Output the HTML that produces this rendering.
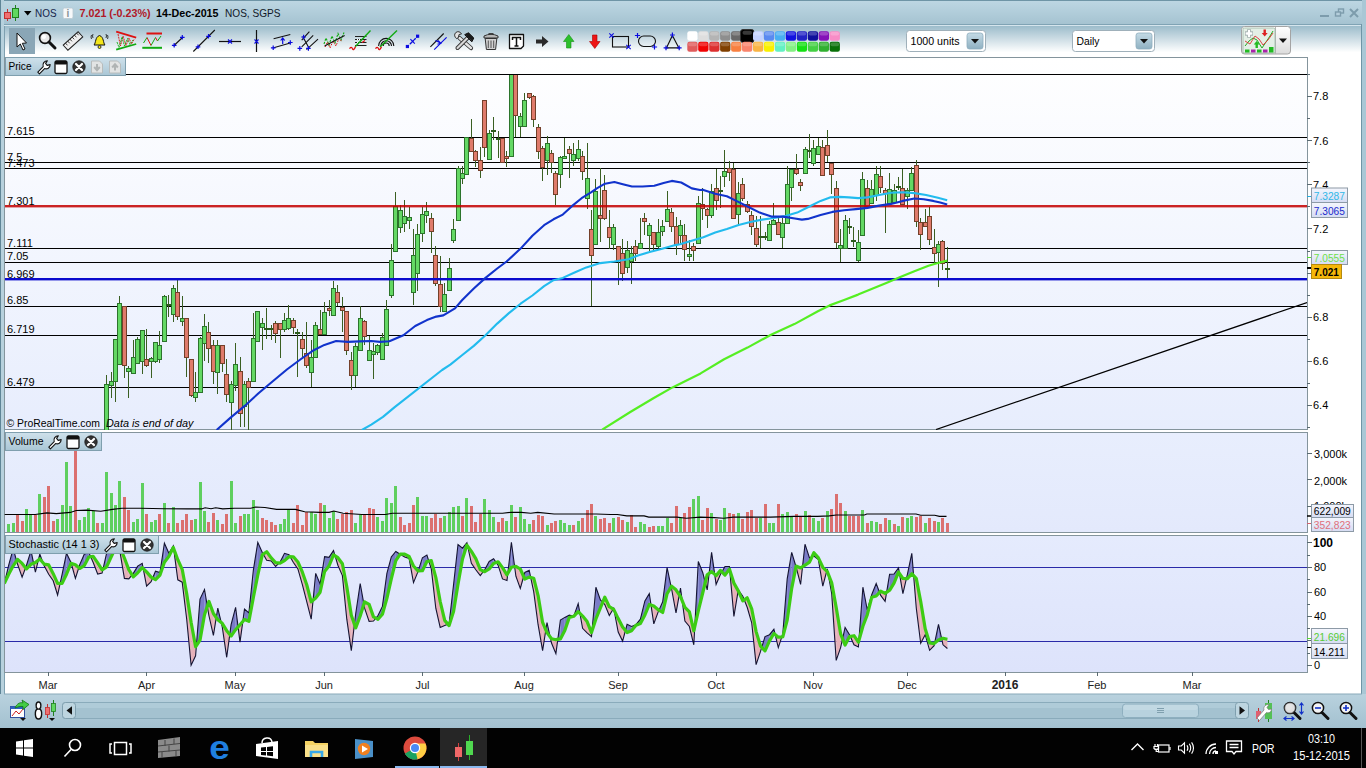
<!DOCTYPE html>
<html><head><meta charset="utf-8"><title>NOS</title>
<style>
html,body{margin:0;padding:0;background:#a9c7d5;overflow:hidden}
body{width:1366px;height:768px;position:relative;font-family:"Liberation Sans",Arial,sans-serif}
svg{position:absolute;left:0;top:0;display:block}
text{font-family:"Liberation Sans",Arial,sans-serif}
</style></head><body>
<svg width="1366" height="768" viewBox="0 0 1366 768">
<defs>
<linearGradient id="gTitle" x1="0" y1="0" x2="0" y2="1"><stop offset="0" stop-color="#bed7e3"/><stop offset="0.5" stop-color="#b1cdda"/><stop offset="1" stop-color="#a4c2d0"/></linearGradient>
<linearGradient id="gTool" x1="0" y1="0" x2="0" y2="1"><stop offset="0" stop-color="#9cbccb"/><stop offset="0.85" stop-color="#ffffff"/><stop offset="1" stop-color="#ffffff"/></linearGradient>
<linearGradient id="gPrice" x1="0" y1="0" x2="0" y2="1"><stop offset="0" stop-color="#ffffff"/><stop offset="1" stop-color="#e7edfd"/></linearGradient>
<linearGradient id="gVol" x1="0" y1="0" x2="0" y2="1"><stop offset="0" stop-color="#e8eefd"/><stop offset="1" stop-color="#e3e9fc"/></linearGradient>
<linearGradient id="gSto" x1="0" y1="0" x2="0" y2="1"><stop offset="0" stop-color="#e5ebfd"/><stop offset="1" stop-color="#dde3fb"/></linearGradient>
<linearGradient id="gTab" x1="0" y1="0" x2="0" y2="1"><stop offset="0" stop-color="#cfe1eb"/><stop offset="1" stop-color="#a9c6d5"/></linearGradient>
<linearGradient id="gBot" x1="0" y1="0" x2="0" y2="1"><stop offset="0" stop-color="#b9d2de"/><stop offset="1" stop-color="#a3c1d0"/></linearGradient>
<linearGradient id="gBtn" x1="0" y1="0" x2="0" y2="1"><stop offset="0" stop-color="#ffffff"/><stop offset="1" stop-color="#dcdcdc"/></linearGradient>
<linearGradient id="gDrop" x1="0" y1="0" x2="0" y2="1"><stop offset="0" stop-color="#c5dbe6"/><stop offset="1" stop-color="#8fb1c2"/></linearGradient>
<linearGradient id="gLbl" x1="0" y1="0" x2="0" y2="1"><stop offset="0" stop-color="#f4f6fd"/><stop offset="1" stop-color="#d5dcf3"/></linearGradient>
<clipPath id="cpP"><rect x="5" y="75" width="1302" height="355"/></clipPath>
<clipPath id="cpS"><rect x="5" y="536" width="1302" height="136"/></clipPath>
</defs>

<rect x="0" y="0" width="1366" height="728" fill="#a9c7d5"/>
<rect x="0" y="0" width="1366" height="25" fill="url(#gTitle)"/>
<rect x="0" y="0" width="1366" height="1" fill="#6f95a6"/>
<rect x="4" y="24" width="1358" height="1" fill="#7fa3b4"/>
<rect x="4" y="25" width="1358" height="1" fill="#d5e5ed"/>
<rect x="4" y="26" width="1358" height="31" fill="url(#gTool)"/>
<rect x="4" y="57" width="1358" height="637" fill="#ffffff"/>
<rect x="0" y="0" width="1" height="728" fill="#5f8597"/>
<rect x="1" y="0" width="3" height="728" fill="#b7d1dd"/>
<rect x="4" y="26" width="1" height="668" fill="#7fa0b0"/>
<rect x="1361" y="24" width="1" height="670" fill="#6f95a6"/>
<rect x="1362" y="0" width="4" height="728" fill="#a9c7d5"/>
<rect x="0" y="694" width="1366" height="34" fill="url(#gBot)"/>
<rect x="4" y="693.500" width="1358" height="1" fill="#8aaaba"/>
<rect x="4.500" y="57.500" width="1303" height="372" fill="url(#gPrice)" stroke="#84949c" stroke-width="1"/>
<rect x="4.500" y="432.500" width="1303" height="100" fill="url(#gVol)" stroke="#84949c" stroke-width="1"/>
<rect x="4.500" y="535.500" width="1303" height="137" fill="url(#gSto)" stroke="#84949c" stroke-width="1"/>
<g shape-rendering="crispEdges">
<line x1="5" y1="74.5" x2="1307" y2="74.5" stroke="#000" stroke-width="1.4"/>
<line x1="5" y1="137.5" x2="1307" y2="137.5" stroke="#000" stroke-width="1.4"/>
<line x1="5" y1="162.5" x2="1307" y2="162.5" stroke="#000" stroke-width="1.4"/>
<line x1="5" y1="168.5" x2="1307" y2="168.5" stroke="#000" stroke-width="1.4"/>
<line x1="5" y1="248.5" x2="1307" y2="248.5" stroke="#000" stroke-width="1.4"/>
<line x1="5" y1="262.5" x2="1307" y2="262.5" stroke="#000" stroke-width="1.4"/>
<line x1="5" y1="306.5" x2="1307" y2="306.5" stroke="#000" stroke-width="1.4"/>
<line x1="5" y1="335.5" x2="1307" y2="335.5" stroke="#000" stroke-width="1.4"/>
<line x1="5" y1="387.5" x2="1307" y2="387.5" stroke="#000" stroke-width="1.4"/>
</g>
<line x1="936" y1="429.5" x2="1307" y2="302.5" stroke="#000" stroke-width="1.3" clip-path="url(#cpP)"/>
<text x="7" y="135.3" font-size="11" fill="#000">7.615</text>
<text x="7" y="160.7" font-size="11" fill="#000">7.5</text>
<text x="7" y="166.7" font-size="11" fill="#000">7.473</text>
<text x="7" y="246.6" font-size="11" fill="#000">7.111</text>
<text x="7" y="260.1" font-size="11" fill="#000">7.05</text>
<text x="7" y="304.2" font-size="11" fill="#000">6.85</text>
<text x="7" y="333.1" font-size="11" fill="#000">6.719</text>
<text x="7" y="386.1" font-size="11" fill="#000">6.479</text>
<text x="7" y="204.7" font-size="11" fill="#000">7.301</text>
<text x="7" y="277.9" font-size="11" fill="#000">6.969</text>
<g clip-path="url(#cpP)" shape-rendering="crispEdges">
<rect x="106" y="375" width="1" height="63" fill="#3a5f22"/>
<rect x="104" y="384" width="5" height="55" fill="#2c742c"/>
<rect x="105" y="385" width="3" height="53" fill="#64d864"/>
<rect x="111" y="372" width="1" height="26" fill="#3a5f22"/>
<rect x="109" y="381" width="5" height="5" fill="#2c742c"/>
<rect x="110" y="382" width="3" height="3" fill="#64d864"/>
<rect x="115" y="339" width="1" height="63" fill="#3a5f22"/>
<rect x="113" y="339" width="5" height="43" fill="#2c742c"/>
<rect x="114" y="340" width="3" height="41" fill="#64d864"/>
<rect x="119" y="296" width="1" height="68" fill="#3a5f22"/>
<rect x="117" y="303" width="5" height="62" fill="#2c742c"/>
<rect x="118" y="304" width="3" height="60" fill="#64d864"/>
<rect x="124" y="306" width="1" height="72" fill="#3a5f22"/>
<rect x="122" y="306" width="5" height="60" fill="#74402a"/>
<rect x="123" y="307" width="3" height="58" fill="#df7b6b"/>
<rect x="128" y="366" width="1" height="32" fill="#3a5f22"/>
<rect x="126" y="368" width="5" height="4" fill="#2c742c"/>
<rect x="127" y="369" width="3" height="2" fill="#64d864"/>
<rect x="133" y="340" width="1" height="33" fill="#3a5f22"/>
<rect x="131" y="357" width="5" height="17" fill="#2c742c"/>
<rect x="132" y="358" width="3" height="15" fill="#64d864"/>
<rect x="137" y="337" width="1" height="26" fill="#3a5f22"/>
<rect x="135" y="339" width="5" height="25" fill="#2c742c"/>
<rect x="136" y="340" width="3" height="23" fill="#64d864"/>
<rect x="142" y="330" width="1" height="44" fill="#3a5f22"/>
<rect x="140" y="330" width="5" height="32" fill="#2c742c"/>
<rect x="141" y="331" width="3" height="30" fill="#64d864"/>
<rect x="146" y="329" width="1" height="38" fill="#3a5f22"/>
<rect x="144" y="359" width="5" height="7" fill="#74402a"/>
<rect x="145" y="360" width="3" height="5" fill="#df7b6b"/>
<rect x="151" y="357" width="1" height="21" fill="#3a5f22"/>
<rect x="149" y="358" width="5" height="4" fill="#2c742c"/>
<rect x="150" y="359" width="3" height="2" fill="#64d864"/>
<rect x="155" y="342" width="1" height="21" fill="#3a5f22"/>
<rect x="153" y="342" width="5" height="20" fill="#2c742c"/>
<rect x="154" y="343" width="3" height="18" fill="#64d864"/>
<rect x="159" y="331" width="1" height="32" fill="#3a5f22"/>
<rect x="157" y="345" width="5" height="15" fill="#2c742c"/>
<rect x="158" y="346" width="3" height="13" fill="#64d864"/>
<rect x="164" y="295" width="1" height="46" fill="#3a5f22"/>
<rect x="162" y="296" width="5" height="46" fill="#2c742c"/>
<rect x="163" y="297" width="3" height="44" fill="#64d864"/>
<rect x="168" y="295" width="1" height="22" fill="#3a5f22"/>
<rect x="166" y="304" width="5" height="1" fill="#2c5a1c"/>
<rect x="166" y="304" width="5" height="2" fill="#2c5a1c"/>
<rect x="173" y="285" width="1" height="37" fill="#3a5f22"/>
<rect x="171" y="288" width="5" height="27" fill="#2c742c"/>
<rect x="172" y="289" width="3" height="25" fill="#64d864"/>
<rect x="177" y="280" width="1" height="40" fill="#3a5f22"/>
<rect x="175" y="292" width="5" height="25" fill="#74402a"/>
<rect x="176" y="293" width="3" height="23" fill="#df7b6b"/>
<rect x="182" y="296" width="1" height="30" fill="#3a5f22"/>
<rect x="180" y="318" width="5" height="4" fill="#2c742c"/>
<rect x="181" y="319" width="3" height="2" fill="#64d864"/>
<rect x="186" y="318" width="1" height="59" fill="#3a5f22"/>
<rect x="184" y="318" width="5" height="40" fill="#74402a"/>
<rect x="185" y="319" width="3" height="38" fill="#df7b6b"/>
<rect x="191" y="359" width="1" height="38" fill="#3a5f22"/>
<rect x="189" y="359" width="5" height="37" fill="#74402a"/>
<rect x="190" y="360" width="3" height="35" fill="#df7b6b"/>
<rect x="195" y="372" width="1" height="30" fill="#3a5f22"/>
<rect x="193" y="392" width="5" height="6" fill="#2c742c"/>
<rect x="194" y="393" width="3" height="4" fill="#64d864"/>
<rect x="200" y="337" width="1" height="55" fill="#3a5f22"/>
<rect x="198" y="338" width="5" height="55" fill="#2c742c"/>
<rect x="199" y="339" width="3" height="53" fill="#64d864"/>
<rect x="204" y="314" width="1" height="47" fill="#3a5f22"/>
<rect x="202" y="326" width="5" height="18" fill="#2c742c"/>
<rect x="203" y="327" width="3" height="16" fill="#64d864"/>
<rect x="208" y="322" width="1" height="41" fill="#3a5f22"/>
<rect x="206" y="332" width="5" height="17" fill="#74402a"/>
<rect x="207" y="333" width="3" height="15" fill="#df7b6b"/>
<rect x="213" y="340" width="1" height="44" fill="#3a5f22"/>
<rect x="211" y="345" width="5" height="27" fill="#74402a"/>
<rect x="212" y="346" width="3" height="25" fill="#df7b6b"/>
<rect x="217" y="340" width="1" height="54" fill="#3a5f22"/>
<rect x="215" y="345" width="5" height="28" fill="#2c742c"/>
<rect x="216" y="346" width="3" height="26" fill="#64d864"/>
<rect x="222" y="345" width="1" height="27" fill="#3a5f22"/>
<rect x="220" y="345" width="5" height="19" fill="#74402a"/>
<rect x="221" y="346" width="3" height="17" fill="#df7b6b"/>
<rect x="226" y="359" width="1" height="43" fill="#3a5f22"/>
<rect x="224" y="374" width="5" height="21" fill="#74402a"/>
<rect x="225" y="375" width="3" height="19" fill="#df7b6b"/>
<rect x="231" y="381" width="1" height="54" fill="#3a5f22"/>
<rect x="229" y="384" width="5" height="19" fill="#2c742c"/>
<rect x="230" y="385" width="3" height="17" fill="#64d864"/>
<rect x="235" y="343" width="1" height="48" fill="#3a5f22"/>
<rect x="233" y="364" width="5" height="22" fill="#2c742c"/>
<rect x="234" y="365" width="3" height="20" fill="#64d864"/>
<rect x="240" y="357" width="1" height="70" fill="#3a5f22"/>
<rect x="238" y="371" width="5" height="43" fill="#74402a"/>
<rect x="239" y="372" width="3" height="41" fill="#df7b6b"/>
<rect x="244" y="381" width="1" height="46" fill="#3a5f22"/>
<rect x="242" y="384" width="5" height="23" fill="#2c742c"/>
<rect x="243" y="385" width="3" height="21" fill="#64d864"/>
<rect x="248" y="378" width="1" height="54" fill="#3a5f22"/>
<rect x="246" y="381" width="5" height="7" fill="#74402a"/>
<rect x="247" y="382" width="3" height="5" fill="#df7b6b"/>
<rect x="253" y="313" width="1" height="68" fill="#3a5f22"/>
<rect x="251" y="338" width="5" height="44" fill="#2c742c"/>
<rect x="252" y="339" width="3" height="42" fill="#64d864"/>
<rect x="257" y="311" width="1" height="30" fill="#3a5f22"/>
<rect x="255" y="311" width="5" height="31" fill="#2c742c"/>
<rect x="256" y="312" width="3" height="29" fill="#64d864"/>
<rect x="262" y="318" width="1" height="32" fill="#3a5f22"/>
<rect x="260" y="323" width="5" height="5" fill="#2c742c"/>
<rect x="261" y="324" width="3" height="3" fill="#64d864"/>
<rect x="266" y="308" width="1" height="31" fill="#3a5f22"/>
<rect x="264" y="328" width="5" height="1" fill="#2c5a1c"/>
<rect x="264" y="328" width="5" height="2" fill="#2c5a1c"/>
<rect x="271" y="325" width="1" height="15" fill="#3a5f22"/>
<rect x="269" y="328" width="5" height="1" fill="#2c5a1c"/>
<rect x="269" y="328" width="5" height="2" fill="#2c5a1c"/>
<rect x="275" y="321" width="1" height="22" fill="#3a5f22"/>
<rect x="273" y="323" width="5" height="11" fill="#74402a"/>
<rect x="274" y="324" width="3" height="9" fill="#df7b6b"/>
<rect x="280" y="323" width="1" height="35" fill="#3a5f22"/>
<rect x="278" y="323" width="5" height="7" fill="#74402a"/>
<rect x="279" y="324" width="3" height="5" fill="#df7b6b"/>
<rect x="284" y="313" width="1" height="19" fill="#3a5f22"/>
<rect x="282" y="320" width="5" height="10" fill="#2c742c"/>
<rect x="283" y="321" width="3" height="8" fill="#64d864"/>
<rect x="288" y="305" width="1" height="25" fill="#3a5f22"/>
<rect x="286" y="318" width="5" height="11" fill="#2c742c"/>
<rect x="287" y="319" width="3" height="9" fill="#64d864"/>
<rect x="293" y="318" width="1" height="16" fill="#3a5f22"/>
<rect x="291" y="320" width="5" height="8" fill="#74402a"/>
<rect x="292" y="321" width="3" height="6" fill="#df7b6b"/>
<rect x="297" y="329" width="1" height="48" fill="#3a5f22"/>
<rect x="295" y="332" width="5" height="2" fill="#2c5a1c"/>
<rect x="302" y="332" width="1" height="25" fill="#3a5f22"/>
<rect x="300" y="339" width="5" height="10" fill="#74402a"/>
<rect x="301" y="340" width="3" height="8" fill="#df7b6b"/>
<rect x="306" y="322" width="1" height="46" fill="#3a5f22"/>
<rect x="304" y="353" width="5" height="13" fill="#74402a"/>
<rect x="305" y="354" width="3" height="11" fill="#df7b6b"/>
<rect x="311" y="340" width="1" height="47" fill="#3a5f22"/>
<rect x="309" y="357" width="5" height="16" fill="#2c742c"/>
<rect x="310" y="358" width="3" height="14" fill="#64d864"/>
<rect x="315" y="322" width="1" height="35" fill="#3a5f22"/>
<rect x="313" y="325" width="5" height="33" fill="#2c742c"/>
<rect x="314" y="326" width="3" height="31" fill="#64d864"/>
<rect x="320" y="310" width="1" height="24" fill="#3a5f22"/>
<rect x="318" y="329" width="5" height="6" fill="#74402a"/>
<rect x="319" y="330" width="3" height="4" fill="#df7b6b"/>
<rect x="324" y="302" width="1" height="32" fill="#3a5f22"/>
<rect x="322" y="312" width="5" height="23" fill="#2c742c"/>
<rect x="323" y="313" width="3" height="21" fill="#64d864"/>
<rect x="329" y="300" width="1" height="16" fill="#3a5f22"/>
<rect x="327" y="308" width="5" height="3" fill="#74402a"/>
<rect x="328" y="309" width="3" height="1" fill="#df7b6b"/>
<rect x="333" y="281" width="1" height="34" fill="#3a5f22"/>
<rect x="331" y="288" width="5" height="28" fill="#2c742c"/>
<rect x="332" y="289" width="3" height="26" fill="#64d864"/>
<rect x="337" y="285" width="1" height="21" fill="#3a5f22"/>
<rect x="335" y="292" width="5" height="11" fill="#74402a"/>
<rect x="336" y="293" width="3" height="9" fill="#df7b6b"/>
<rect x="342" y="297" width="1" height="35" fill="#3a5f22"/>
<rect x="340" y="307" width="5" height="4" fill="#74402a"/>
<rect x="341" y="308" width="3" height="2" fill="#df7b6b"/>
<rect x="346" y="311" width="1" height="44" fill="#3a5f22"/>
<rect x="344" y="311" width="5" height="40" fill="#74402a"/>
<rect x="345" y="312" width="3" height="38" fill="#df7b6b"/>
<rect x="351" y="352" width="1" height="38" fill="#3a5f22"/>
<rect x="349" y="360" width="5" height="16" fill="#74402a"/>
<rect x="350" y="361" width="3" height="14" fill="#df7b6b"/>
<rect x="355" y="343" width="1" height="44" fill="#3a5f22"/>
<rect x="353" y="346" width="5" height="30" fill="#2c742c"/>
<rect x="354" y="347" width="3" height="28" fill="#64d864"/>
<rect x="360" y="306" width="1" height="44" fill="#3a5f22"/>
<rect x="358" y="318" width="5" height="33" fill="#2c742c"/>
<rect x="359" y="319" width="3" height="31" fill="#64d864"/>
<rect x="364" y="320" width="1" height="25" fill="#3a5f22"/>
<rect x="362" y="321" width="5" height="16" fill="#74402a"/>
<rect x="363" y="322" width="3" height="14" fill="#df7b6b"/>
<rect x="369" y="336" width="1" height="24" fill="#3a5f22"/>
<rect x="367" y="350" width="5" height="11" fill="#2c742c"/>
<rect x="368" y="351" width="3" height="9" fill="#64d864"/>
<rect x="373" y="343" width="1" height="36" fill="#3a5f22"/>
<rect x="371" y="351" width="5" height="4" fill="#2c742c"/>
<rect x="372" y="352" width="3" height="2" fill="#64d864"/>
<rect x="377" y="344" width="1" height="11" fill="#3a5f22"/>
<rect x="375" y="345" width="5" height="8" fill="#2c742c"/>
<rect x="376" y="346" width="3" height="6" fill="#64d864"/>
<rect x="382" y="333" width="1" height="26" fill="#3a5f22"/>
<rect x="380" y="337" width="5" height="23" fill="#2c742c"/>
<rect x="381" y="338" width="3" height="21" fill="#64d864"/>
<rect x="386" y="300" width="1" height="45" fill="#3a5f22"/>
<rect x="384" y="309" width="5" height="37" fill="#2c742c"/>
<rect x="385" y="310" width="3" height="35" fill="#64d864"/>
<rect x="391" y="244" width="1" height="54" fill="#3a5f22"/>
<rect x="389" y="260" width="5" height="36" fill="#2c742c"/>
<rect x="390" y="261" width="3" height="34" fill="#64d864"/>
<rect x="395" y="192" width="1" height="59" fill="#3a5f22"/>
<rect x="393" y="206" width="5" height="46" fill="#2c742c"/>
<rect x="394" y="207" width="3" height="44" fill="#64d864"/>
<rect x="400" y="205" width="1" height="28" fill="#3a5f22"/>
<rect x="398" y="210" width="5" height="18" fill="#2c742c"/>
<rect x="399" y="211" width="3" height="16" fill="#64d864"/>
<rect x="404" y="200" width="1" height="32" fill="#3a5f22"/>
<rect x="402" y="216" width="5" height="8" fill="#2c742c"/>
<rect x="403" y="217" width="3" height="6" fill="#64d864"/>
<rect x="409" y="207" width="1" height="22" fill="#3a5f22"/>
<rect x="407" y="217" width="5" height="4" fill="#2c742c"/>
<rect x="408" y="218" width="3" height="2" fill="#64d864"/>
<rect x="413" y="229" width="1" height="76" fill="#3a5f22"/>
<rect x="411" y="255" width="5" height="38" fill="#2c742c"/>
<rect x="412" y="256" width="3" height="36" fill="#64d864"/>
<rect x="417" y="224" width="1" height="67" fill="#3a5f22"/>
<rect x="415" y="234" width="5" height="40" fill="#2c742c"/>
<rect x="416" y="235" width="3" height="38" fill="#64d864"/>
<rect x="422" y="207" width="1" height="35" fill="#3a5f22"/>
<rect x="420" y="214" width="5" height="20" fill="#2c742c"/>
<rect x="421" y="215" width="3" height="18" fill="#64d864"/>
<rect x="426" y="202" width="1" height="21" fill="#3a5f22"/>
<rect x="424" y="211" width="5" height="5" fill="#2c742c"/>
<rect x="425" y="212" width="3" height="3" fill="#64d864"/>
<rect x="431" y="213" width="1" height="40" fill="#3a5f22"/>
<rect x="429" y="218" width="5" height="14" fill="#74402a"/>
<rect x="430" y="219" width="3" height="12" fill="#df7b6b"/>
<rect x="435" y="246" width="1" height="40" fill="#3a5f22"/>
<rect x="433" y="255" width="5" height="29" fill="#74402a"/>
<rect x="434" y="256" width="3" height="27" fill="#df7b6b"/>
<rect x="440" y="256" width="1" height="56" fill="#3a5f22"/>
<rect x="438" y="284" width="5" height="23" fill="#74402a"/>
<rect x="439" y="285" width="3" height="21" fill="#df7b6b"/>
<rect x="444" y="283" width="1" height="29" fill="#3a5f22"/>
<rect x="442" y="294" width="5" height="18" fill="#2c742c"/>
<rect x="443" y="295" width="3" height="16" fill="#64d864"/>
<rect x="449" y="258" width="1" height="32" fill="#3a5f22"/>
<rect x="447" y="268" width="5" height="23" fill="#2c742c"/>
<rect x="448" y="269" width="3" height="21" fill="#64d864"/>
<rect x="453" y="219" width="1" height="24" fill="#3a5f22"/>
<rect x="451" y="229" width="5" height="12" fill="#2c742c"/>
<rect x="452" y="230" width="3" height="10" fill="#64d864"/>
<rect x="458" y="166" width="1" height="54" fill="#3a5f22"/>
<rect x="456" y="168" width="5" height="53" fill="#2c742c"/>
<rect x="457" y="169" width="3" height="51" fill="#64d864"/>
<rect x="462" y="166" width="1" height="18" fill="#3a5f22"/>
<rect x="460" y="173" width="5" height="6" fill="#2c742c"/>
<rect x="461" y="174" width="3" height="4" fill="#64d864"/>
<rect x="466" y="137" width="1" height="37" fill="#3a5f22"/>
<rect x="464" y="137" width="5" height="38" fill="#2c742c"/>
<rect x="465" y="138" width="3" height="36" fill="#64d864"/>
<rect x="471" y="119" width="1" height="32" fill="#3a5f22"/>
<rect x="469" y="138" width="5" height="14" fill="#74402a"/>
<rect x="470" y="139" width="3" height="12" fill="#df7b6b"/>
<rect x="475" y="150" width="1" height="17" fill="#3a5f22"/>
<rect x="473" y="151" width="5" height="10" fill="#74402a"/>
<rect x="474" y="152" width="3" height="8" fill="#df7b6b"/>
<rect x="480" y="147" width="1" height="31" fill="#3a5f22"/>
<rect x="478" y="160" width="5" height="11" fill="#74402a"/>
<rect x="479" y="161" width="3" height="9" fill="#df7b6b"/>
<rect x="484" y="100" width="1" height="57" fill="#3a5f22"/>
<rect x="482" y="100" width="5" height="48" fill="#74402a"/>
<rect x="483" y="101" width="3" height="46" fill="#df7b6b"/>
<rect x="489" y="130" width="1" height="30" fill="#3a5f22"/>
<rect x="487" y="133" width="5" height="27" fill="#2c742c"/>
<rect x="488" y="134" width="3" height="25" fill="#64d864"/>
<rect x="493" y="117" width="1" height="23" fill="#3a5f22"/>
<rect x="491" y="130" width="5" height="1" fill="#2c5a1c"/>
<rect x="491" y="130" width="5" height="2" fill="#2c5a1c"/>
<rect x="498" y="131" width="1" height="27" fill="#3a5f22"/>
<rect x="496" y="138" width="5" height="2" fill="#2c5a1c"/>
<rect x="502" y="138" width="1" height="24" fill="#3a5f22"/>
<rect x="500" y="138" width="5" height="25" fill="#74402a"/>
<rect x="501" y="139" width="3" height="23" fill="#df7b6b"/>
<rect x="506" y="151" width="1" height="16" fill="#3a5f22"/>
<rect x="504" y="156" width="5" height="3" fill="#74402a"/>
<rect x="505" y="157" width="3" height="1" fill="#df7b6b"/>
<rect x="511" y="74" width="1" height="82" fill="#3a5f22"/>
<rect x="509" y="74" width="5" height="83" fill="#2c742c"/>
<rect x="510" y="75" width="3" height="81" fill="#64d864"/>
<rect x="515" y="74" width="1" height="63" fill="#3a5f22"/>
<rect x="513" y="74" width="5" height="42" fill="#74402a"/>
<rect x="514" y="75" width="3" height="40" fill="#df7b6b"/>
<rect x="520" y="113" width="1" height="24" fill="#3a5f22"/>
<rect x="518" y="116" width="5" height="11" fill="#2c742c"/>
<rect x="519" y="117" width="3" height="9" fill="#64d864"/>
<rect x="524" y="93" width="1" height="33" fill="#3a5f22"/>
<rect x="522" y="100" width="5" height="27" fill="#2c742c"/>
<rect x="523" y="101" width="3" height="25" fill="#64d864"/>
<rect x="529" y="93" width="1" height="6" fill="#3a5f22"/>
<rect x="527" y="93" width="5" height="5" fill="#74402a"/>
<rect x="528" y="94" width="3" height="3" fill="#df7b6b"/>
<rect x="533" y="95" width="1" height="32" fill="#3a5f22"/>
<rect x="531" y="96" width="5" height="24" fill="#74402a"/>
<rect x="532" y="97" width="3" height="22" fill="#df7b6b"/>
<rect x="538" y="124" width="1" height="35" fill="#3a5f22"/>
<rect x="536" y="127" width="5" height="25" fill="#74402a"/>
<rect x="537" y="128" width="3" height="23" fill="#df7b6b"/>
<rect x="542" y="146" width="1" height="35" fill="#3a5f22"/>
<rect x="540" y="148" width="5" height="20" fill="#74402a"/>
<rect x="541" y="149" width="3" height="18" fill="#df7b6b"/>
<rect x="547" y="136" width="1" height="39" fill="#3a5f22"/>
<rect x="545" y="143" width="5" height="18" fill="#2c742c"/>
<rect x="546" y="144" width="3" height="16" fill="#64d864"/>
<rect x="551" y="150" width="1" height="23" fill="#3a5f22"/>
<rect x="549" y="153" width="5" height="10" fill="#74402a"/>
<rect x="550" y="154" width="3" height="8" fill="#df7b6b"/>
<rect x="555" y="171" width="1" height="34" fill="#3a5f22"/>
<rect x="553" y="173" width="5" height="22" fill="#74402a"/>
<rect x="554" y="174" width="3" height="20" fill="#df7b6b"/>
<rect x="560" y="156" width="1" height="32" fill="#3a5f22"/>
<rect x="558" y="157" width="5" height="18" fill="#2c742c"/>
<rect x="559" y="158" width="3" height="16" fill="#64d864"/>
<rect x="564" y="138" width="1" height="20" fill="#3a5f22"/>
<rect x="562" y="156" width="5" height="3" fill="#2c742c"/>
<rect x="563" y="157" width="3" height="1" fill="#64d864"/>
<rect x="569" y="146" width="1" height="32" fill="#3a5f22"/>
<rect x="567" y="149" width="5" height="5" fill="#74402a"/>
<rect x="568" y="150" width="3" height="3" fill="#df7b6b"/>
<rect x="573" y="143" width="1" height="23" fill="#3a5f22"/>
<rect x="571" y="154" width="5" height="7" fill="#2c742c"/>
<rect x="572" y="155" width="3" height="5" fill="#64d864"/>
<rect x="578" y="140" width="1" height="21" fill="#3a5f22"/>
<rect x="576" y="149" width="5" height="10" fill="#2c742c"/>
<rect x="577" y="150" width="3" height="8" fill="#64d864"/>
<rect x="582" y="151" width="1" height="29" fill="#3a5f22"/>
<rect x="580" y="156" width="5" height="16" fill="#74402a"/>
<rect x="581" y="157" width="3" height="14" fill="#df7b6b"/>
<rect x="587" y="143" width="1" height="66" fill="#3a5f22"/>
<rect x="585" y="178" width="5" height="21" fill="#2c742c"/>
<rect x="586" y="179" width="3" height="19" fill="#64d864"/>
<rect x="591" y="210" width="1" height="96" fill="#3a5f22"/>
<rect x="589" y="229" width="5" height="27" fill="#74402a"/>
<rect x="590" y="230" width="3" height="25" fill="#df7b6b"/>
<rect x="595" y="179" width="1" height="65" fill="#3a5f22"/>
<rect x="593" y="191" width="5" height="54" fill="#2c742c"/>
<rect x="594" y="192" width="3" height="52" fill="#64d864"/>
<rect x="600" y="168" width="1" height="74" fill="#3a5f22"/>
<rect x="598" y="215" width="5" height="4" fill="#74402a"/>
<rect x="599" y="216" width="3" height="2" fill="#df7b6b"/>
<rect x="604" y="175" width="1" height="45" fill="#3a5f22"/>
<rect x="602" y="190" width="5" height="29" fill="#74402a"/>
<rect x="603" y="191" width="3" height="27" fill="#df7b6b"/>
<rect x="609" y="210" width="1" height="39" fill="#3a5f22"/>
<rect x="607" y="227" width="5" height="11" fill="#74402a"/>
<rect x="608" y="228" width="3" height="9" fill="#df7b6b"/>
<rect x="613" y="224" width="1" height="26" fill="#3a5f22"/>
<rect x="611" y="227" width="5" height="18" fill="#2c742c"/>
<rect x="612" y="228" width="3" height="16" fill="#64d864"/>
<rect x="618" y="246" width="1" height="39" fill="#3a5f22"/>
<rect x="616" y="246" width="5" height="15" fill="#74402a"/>
<rect x="617" y="247" width="3" height="13" fill="#df7b6b"/>
<rect x="622" y="239" width="1" height="42" fill="#3a5f22"/>
<rect x="620" y="253" width="5" height="21" fill="#74402a"/>
<rect x="621" y="254" width="3" height="19" fill="#df7b6b"/>
<rect x="627" y="241" width="1" height="32" fill="#3a5f22"/>
<rect x="625" y="250" width="5" height="18" fill="#2c742c"/>
<rect x="626" y="251" width="3" height="16" fill="#64d864"/>
<rect x="631" y="246" width="1" height="38" fill="#3a5f22"/>
<rect x="629" y="253" width="5" height="9" fill="#2c742c"/>
<rect x="630" y="254" width="3" height="7" fill="#64d864"/>
<rect x="635" y="240" width="1" height="21" fill="#3a5f22"/>
<rect x="633" y="246" width="5" height="8" fill="#74402a"/>
<rect x="634" y="247" width="3" height="6" fill="#df7b6b"/>
<rect x="640" y="218" width="1" height="30" fill="#3a5f22"/>
<rect x="638" y="243" width="5" height="6" fill="#2c742c"/>
<rect x="639" y="244" width="3" height="4" fill="#64d864"/>
<rect x="644" y="213" width="1" height="22" fill="#3a5f22"/>
<rect x="642" y="218" width="5" height="4" fill="#74402a"/>
<rect x="643" y="219" width="3" height="2" fill="#df7b6b"/>
<rect x="649" y="223" width="1" height="28" fill="#3a5f22"/>
<rect x="647" y="225" width="5" height="11" fill="#2c742c"/>
<rect x="648" y="226" width="3" height="9" fill="#64d864"/>
<rect x="653" y="232" width="1" height="19" fill="#3a5f22"/>
<rect x="651" y="232" width="5" height="13" fill="#74402a"/>
<rect x="652" y="233" width="3" height="11" fill="#df7b6b"/>
<rect x="658" y="219" width="1" height="29" fill="#3a5f22"/>
<rect x="656" y="232" width="5" height="15" fill="#2c742c"/>
<rect x="657" y="233" width="3" height="13" fill="#64d864"/>
<rect x="662" y="220" width="1" height="16" fill="#3a5f22"/>
<rect x="660" y="226" width="5" height="6" fill="#2c742c"/>
<rect x="661" y="227" width="3" height="4" fill="#64d864"/>
<rect x="667" y="191" width="1" height="30" fill="#3a5f22"/>
<rect x="665" y="209" width="5" height="13" fill="#2c742c"/>
<rect x="666" y="210" width="3" height="11" fill="#64d864"/>
<rect x="671" y="208" width="1" height="24" fill="#3a5f22"/>
<rect x="669" y="212" width="5" height="15" fill="#74402a"/>
<rect x="670" y="213" width="3" height="13" fill="#df7b6b"/>
<rect x="676" y="217" width="1" height="38" fill="#3a5f22"/>
<rect x="674" y="226" width="5" height="19" fill="#74402a"/>
<rect x="675" y="227" width="3" height="17" fill="#df7b6b"/>
<rect x="680" y="220" width="1" height="24" fill="#3a5f22"/>
<rect x="678" y="225" width="5" height="11" fill="#2c742c"/>
<rect x="679" y="226" width="3" height="9" fill="#64d864"/>
<rect x="684" y="224" width="1" height="37" fill="#3a5f22"/>
<rect x="682" y="235" width="5" height="15" fill="#74402a"/>
<rect x="683" y="236" width="3" height="13" fill="#df7b6b"/>
<rect x="689" y="240" width="1" height="21" fill="#3a5f22"/>
<rect x="687" y="254" width="5" height="3" fill="#2c742c"/>
<rect x="688" y="255" width="3" height="1" fill="#64d864"/>
<rect x="693" y="243" width="1" height="18" fill="#3a5f22"/>
<rect x="691" y="246" width="5" height="5" fill="#74402a"/>
<rect x="692" y="247" width="3" height="3" fill="#df7b6b"/>
<rect x="698" y="196" width="1" height="47" fill="#3a5f22"/>
<rect x="696" y="203" width="5" height="41" fill="#2c742c"/>
<rect x="697" y="204" width="3" height="39" fill="#64d864"/>
<rect x="702" y="188" width="1" height="32" fill="#3a5f22"/>
<rect x="700" y="204" width="5" height="5" fill="#74402a"/>
<rect x="701" y="205" width="3" height="3" fill="#df7b6b"/>
<rect x="707" y="208" width="1" height="20" fill="#3a5f22"/>
<rect x="705" y="209" width="5" height="7" fill="#74402a"/>
<rect x="706" y="210" width="3" height="5" fill="#df7b6b"/>
<rect x="711" y="184" width="1" height="34" fill="#3a5f22"/>
<rect x="709" y="191" width="5" height="25" fill="#2c742c"/>
<rect x="710" y="192" width="3" height="23" fill="#64d864"/>
<rect x="716" y="169" width="1" height="41" fill="#3a5f22"/>
<rect x="714" y="188" width="5" height="13" fill="#74402a"/>
<rect x="715" y="189" width="3" height="11" fill="#df7b6b"/>
<rect x="720" y="176" width="1" height="32" fill="#3a5f22"/>
<rect x="718" y="190" width="5" height="2" fill="#2c5a1c"/>
<rect x="724" y="150" width="1" height="37" fill="#3a5f22"/>
<rect x="722" y="171" width="5" height="6" fill="#2c742c"/>
<rect x="723" y="172" width="3" height="4" fill="#64d864"/>
<rect x="729" y="161" width="1" height="20" fill="#3a5f22"/>
<rect x="727" y="168" width="5" height="5" fill="#74402a"/>
<rect x="728" y="169" width="3" height="3" fill="#df7b6b"/>
<rect x="733" y="163" width="1" height="55" fill="#3a5f22"/>
<rect x="731" y="169" width="5" height="50" fill="#74402a"/>
<rect x="732" y="170" width="3" height="48" fill="#df7b6b"/>
<rect x="738" y="182" width="1" height="42" fill="#3a5f22"/>
<rect x="736" y="193" width="5" height="22" fill="#2c742c"/>
<rect x="737" y="194" width="3" height="20" fill="#64d864"/>
<rect x="742" y="178" width="1" height="23" fill="#3a5f22"/>
<rect x="740" y="184" width="5" height="15" fill="#74402a"/>
<rect x="741" y="185" width="3" height="13" fill="#df7b6b"/>
<rect x="747" y="201" width="1" height="12" fill="#3a5f22"/>
<rect x="745" y="204" width="5" height="8" fill="#74402a"/>
<rect x="746" y="205" width="3" height="6" fill="#df7b6b"/>
<rect x="751" y="211" width="1" height="24" fill="#3a5f22"/>
<rect x="749" y="215" width="5" height="12" fill="#74402a"/>
<rect x="750" y="216" width="3" height="10" fill="#df7b6b"/>
<rect x="756" y="216" width="1" height="31" fill="#3a5f22"/>
<rect x="754" y="228" width="5" height="17" fill="#74402a"/>
<rect x="755" y="229" width="3" height="15" fill="#df7b6b"/>
<rect x="760" y="216" width="1" height="32" fill="#3a5f22"/>
<rect x="758" y="236" width="5" height="2" fill="#2c5a1c"/>
<rect x="765" y="232" width="1" height="8" fill="#3a5f22"/>
<rect x="763" y="236" width="5" height="2" fill="#2c5a1c"/>
<rect x="769" y="221" width="1" height="19" fill="#3a5f22"/>
<rect x="767" y="224" width="5" height="17" fill="#2c742c"/>
<rect x="768" y="225" width="3" height="15" fill="#64d864"/>
<rect x="773" y="203" width="1" height="21" fill="#3a5f22"/>
<rect x="771" y="220" width="5" height="5" fill="#2c742c"/>
<rect x="772" y="221" width="3" height="3" fill="#64d864"/>
<rect x="778" y="218" width="1" height="17" fill="#3a5f22"/>
<rect x="776" y="222" width="5" height="13" fill="#74402a"/>
<rect x="777" y="223" width="3" height="11" fill="#df7b6b"/>
<rect x="782" y="218" width="1" height="30" fill="#3a5f22"/>
<rect x="780" y="223" width="5" height="15" fill="#2c742c"/>
<rect x="781" y="224" width="3" height="13" fill="#64d864"/>
<rect x="787" y="166" width="1" height="57" fill="#3a5f22"/>
<rect x="785" y="184" width="5" height="40" fill="#2c742c"/>
<rect x="786" y="185" width="3" height="38" fill="#64d864"/>
<rect x="791" y="169" width="1" height="32" fill="#3a5f22"/>
<rect x="789" y="169" width="5" height="19" fill="#2c742c"/>
<rect x="790" y="170" width="3" height="17" fill="#64d864"/>
<rect x="796" y="154" width="1" height="21" fill="#3a5f22"/>
<rect x="794" y="169" width="5" height="5" fill="#74402a"/>
<rect x="795" y="170" width="3" height="3" fill="#df7b6b"/>
<rect x="800" y="179" width="1" height="12" fill="#3a5f22"/>
<rect x="798" y="182" width="5" height="4" fill="#74402a"/>
<rect x="799" y="183" width="3" height="2" fill="#df7b6b"/>
<rect x="805" y="147" width="1" height="26" fill="#3a5f22"/>
<rect x="803" y="149" width="5" height="25" fill="#2c742c"/>
<rect x="804" y="150" width="3" height="23" fill="#64d864"/>
<rect x="809" y="134" width="1" height="24" fill="#3a5f22"/>
<rect x="807" y="150" width="5" height="2" fill="#2c5a1c"/>
<rect x="813" y="140" width="1" height="26" fill="#3a5f22"/>
<rect x="811" y="148" width="5" height="16" fill="#2c742c"/>
<rect x="812" y="149" width="3" height="14" fill="#64d864"/>
<rect x="818" y="138" width="1" height="17" fill="#3a5f22"/>
<rect x="816" y="146" width="5" height="9" fill="#2c742c"/>
<rect x="817" y="147" width="3" height="7" fill="#64d864"/>
<rect x="822" y="140" width="1" height="35" fill="#3a5f22"/>
<rect x="820" y="147" width="5" height="29" fill="#74402a"/>
<rect x="821" y="148" width="3" height="27" fill="#df7b6b"/>
<rect x="827" y="130" width="1" height="32" fill="#3a5f22"/>
<rect x="825" y="145" width="5" height="11" fill="#74402a"/>
<rect x="826" y="146" width="3" height="9" fill="#df7b6b"/>
<rect x="831" y="163" width="1" height="31" fill="#3a5f22"/>
<rect x="829" y="163" width="5" height="12" fill="#74402a"/>
<rect x="830" y="164" width="3" height="10" fill="#df7b6b"/>
<rect x="836" y="181" width="1" height="67" fill="#3a5f22"/>
<rect x="834" y="188" width="5" height="55" fill="#74402a"/>
<rect x="835" y="189" width="3" height="53" fill="#df7b6b"/>
<rect x="840" y="229" width="1" height="33" fill="#3a5f22"/>
<rect x="838" y="245" width="5" height="4" fill="#2c742c"/>
<rect x="839" y="246" width="3" height="2" fill="#64d864"/>
<rect x="845" y="215" width="1" height="33" fill="#3a5f22"/>
<rect x="843" y="220" width="5" height="29" fill="#2c742c"/>
<rect x="844" y="221" width="3" height="27" fill="#64d864"/>
<rect x="849" y="218" width="1" height="16" fill="#3a5f22"/>
<rect x="847" y="226" width="5" height="2" fill="#2c5a1c"/>
<rect x="853" y="227" width="1" height="20" fill="#3a5f22"/>
<rect x="851" y="240" width="5" height="2" fill="#2c5a1c"/>
<rect x="858" y="230" width="1" height="32" fill="#3a5f22"/>
<rect x="856" y="242" width="5" height="19" fill="#2c742c"/>
<rect x="857" y="243" width="3" height="17" fill="#64d864"/>
<rect x="862" y="172" width="1" height="63" fill="#3a5f22"/>
<rect x="860" y="179" width="5" height="57" fill="#2c742c"/>
<rect x="861" y="180" width="3" height="55" fill="#64d864"/>
<rect x="867" y="180" width="1" height="26" fill="#3a5f22"/>
<rect x="865" y="188" width="5" height="19" fill="#74402a"/>
<rect x="866" y="189" width="3" height="17" fill="#df7b6b"/>
<rect x="871" y="180" width="1" height="24" fill="#3a5f22"/>
<rect x="869" y="189" width="5" height="15" fill="#2c742c"/>
<rect x="870" y="190" width="3" height="13" fill="#64d864"/>
<rect x="876" y="166" width="1" height="35" fill="#3a5f22"/>
<rect x="874" y="174" width="5" height="22" fill="#2c742c"/>
<rect x="875" y="175" width="3" height="20" fill="#64d864"/>
<rect x="880" y="166" width="1" height="27" fill="#3a5f22"/>
<rect x="878" y="176" width="5" height="12" fill="#74402a"/>
<rect x="879" y="177" width="3" height="10" fill="#df7b6b"/>
<rect x="885" y="188" width="1" height="45" fill="#3a5f22"/>
<rect x="883" y="190" width="5" height="4" fill="#74402a"/>
<rect x="884" y="191" width="3" height="2" fill="#df7b6b"/>
<rect x="889" y="173" width="1" height="30" fill="#3a5f22"/>
<rect x="887" y="189" width="5" height="15" fill="#2c742c"/>
<rect x="888" y="190" width="3" height="13" fill="#64d864"/>
<rect x="894" y="184" width="1" height="20" fill="#3a5f22"/>
<rect x="892" y="190" width="5" height="13" fill="#2c742c"/>
<rect x="893" y="191" width="3" height="11" fill="#64d864"/>
<rect x="898" y="177" width="1" height="13" fill="#3a5f22"/>
<rect x="896" y="186" width="5" height="2" fill="#2c5a1c"/>
<rect x="902" y="169" width="1" height="35" fill="#3a5f22"/>
<rect x="900" y="188" width="5" height="17" fill="#74402a"/>
<rect x="901" y="189" width="3" height="15" fill="#df7b6b"/>
<rect x="907" y="188" width="1" height="21" fill="#3a5f22"/>
<rect x="905" y="190" width="5" height="7" fill="#2c742c"/>
<rect x="906" y="191" width="3" height="5" fill="#64d864"/>
<rect x="911" y="167" width="1" height="24" fill="#3a5f22"/>
<rect x="909" y="173" width="5" height="18" fill="#2c742c"/>
<rect x="910" y="174" width="3" height="16" fill="#64d864"/>
<rect x="916" y="160" width="1" height="67" fill="#3a5f22"/>
<rect x="914" y="165" width="5" height="57" fill="#74402a"/>
<rect x="915" y="166" width="3" height="55" fill="#df7b6b"/>
<rect x="920" y="218" width="1" height="32" fill="#3a5f22"/>
<rect x="918" y="222" width="5" height="13" fill="#74402a"/>
<rect x="919" y="223" width="3" height="11" fill="#df7b6b"/>
<rect x="925" y="209" width="1" height="17" fill="#3a5f22"/>
<rect x="923" y="222" width="5" height="5" fill="#74402a"/>
<rect x="924" y="223" width="3" height="3" fill="#df7b6b"/>
<rect x="929" y="207" width="1" height="38" fill="#3a5f22"/>
<rect x="927" y="216" width="5" height="24" fill="#74402a"/>
<rect x="928" y="217" width="3" height="22" fill="#df7b6b"/>
<rect x="934" y="229" width="1" height="34" fill="#3a5f22"/>
<rect x="932" y="247" width="5" height="7" fill="#74402a"/>
<rect x="933" y="248" width="3" height="5" fill="#df7b6b"/>
<rect x="938" y="241" width="1" height="46" fill="#3a5f22"/>
<rect x="936" y="244" width="5" height="9" fill="#2c742c"/>
<rect x="937" y="245" width="3" height="7" fill="#64d864"/>
<rect x="942" y="240" width="1" height="30" fill="#3a5f22"/>
<rect x="940" y="241" width="5" height="23" fill="#74402a"/>
<rect x="941" y="242" width="3" height="21" fill="#df7b6b"/>
<rect x="947" y="247" width="1" height="31" fill="#3a5f22"/>
<rect x="945" y="268" width="5" height="2" fill="#2c5a1c"/>
</g>
<rect x="5" y="205" width="1302" height="2.4" fill="#c40000" fill-opacity="0.86"/>
<rect x="5" y="278" width="1302" height="2.4" fill="#0a0acd"/>
<g clip-path="url(#cpP)">
<path d="M602.2,429.6 L630.3,412.0 L653.8,398.0 L672.5,387.4 L700.6,373.4 L724.1,359.3 L747.5,347.6 L771.0,334.7 L794.4,324.1 L817.9,311.3 L829.6,305.4 L844.1,300.0 L858.1,294.6 L872.2,288.8 L886.3,282.9 L900.3,277.0 L914.4,271.2 L928.5,265.8 L937.8,263.0 L947.2,260.6" fill="none" stroke="#55ee22" stroke-width="2.2" stroke-linejoin="round"/>
<path d="M361.9,430.0 L371.3,424.6 L383.0,416.9 L394.7,407.1 L442.1,370.0 L450.3,364.6 L462.0,355.3 L473.8,345.9 L485.5,335.3 L497.2,323.6 L508.9,313.1 L520.6,303.7 L532.4,295.5 L544.1,286.1 L553.5,280.2 L562.8,277.9 L574.6,272.5 L586.3,267.4 L600.3,263.1 L614.4,261.5 L628.5,259.2 L637.9,255.6 L649.6,252.1 L661.3,249.1 L675.4,245.1 L680.0,244.2 L691.7,240.7 L703.4,237.2 L715.2,232.5 L726.9,229.0 L738.6,225.0 L750.3,222.0 L762.0,219.6 L773.8,218.0 L785.5,216.1 L797.2,212.6 L808.9,206.7 L820.6,200.9 L830.0,197.4 L839.4,196.9 L848.8,197.4 L858.2,198.1 L867.5,197.4 L879.2,195.0 L891.0,192.7 L902.7,192.2 L914.4,193.1 L926.1,195.0 L937.9,197.8 L947.2,200.2" fill="none" stroke="#22bbee" stroke-width="2.1" stroke-linejoin="round"/>
<path d="M216.6,430.0 L230.6,417.6 L244.7,405.9 L258.8,393.0 L272.8,381.3 L286.9,369.5 L301.0,359.0 L312.7,350.8 L324.4,344.9 L336.1,341.0 L347.9,341.9 L359.6,341.4 L371.3,341.0 L380.0,341.9 L389.4,341.2 L403.4,335.3 L415.2,326.0 L426.9,320.1 L436.3,316.6 L443.3,315.4 L455.0,308.4 L462.0,300.2 L473.8,288.5 L485.5,277.9 L497.2,268.5 L506.6,261.5 L520.6,248.6 L532.4,235.7 L544.1,225.2 L553.5,219.3 L562.8,214.6 L572.2,205.9 L581.6,198.2 L591.0,192.3 L596.8,188.4 L605.0,183.7 L614.4,182.0 L623.8,184.4 L632.0,186.5 L642.5,186.5 L654.3,185.8 L663.6,183.0 L671.8,180.9 L681.2,182.5 L691.8,188.4 L700.0,190.0 L703.4,189.9 L715.2,193.8 L726.9,196.2 L736.3,200.9 L748.0,206.7 L759.7,212.6 L771.4,216.6 L783.1,216.6 L794.9,218.5 L801.9,219.6 L807.8,218.9 L820.6,214.9 L832.4,211.9 L844.1,210.2 L855.8,209.1 L867.5,207.9 L879.2,205.6 L891.0,203.9 L902.7,200.9 L914.4,198.5 L923.8,199.2 L933.2,200.9 L940.2,202.5 L947.2,204.4" fill="none" stroke="#1133cc" stroke-width="2.1" stroke-linejoin="round"/>
</g>
<text x="6.5" y="426.900" font-size="11" fill="#000" textLength="93.5" lengthAdjust="spacingAndGlyphs">© ProRealTime.com</text><text x="106" y="426.900" font-size="11" font-style="italic" fill="#000" textLength="87.5" lengthAdjust="spacingAndGlyphs">Data is end of day</text>
<g shape-rendering="crispEdges">
<rect x="7" y="524" width="3" height="8" fill="#5fcf5f"/>
<rect x="12" y="523" width="3" height="9" fill="#5fcf5f"/>
<rect x="16" y="515" width="3" height="17" fill="#db7070"/>
<rect x="21" y="521" width="3" height="11" fill="#db7070"/>
<rect x="25" y="509" width="3" height="23" fill="#5fcf5f"/>
<rect x="29" y="515" width="3" height="17" fill="#5fcf5f"/>
<rect x="34" y="515" width="3" height="17" fill="#db7070"/>
<rect x="38" y="494" width="3" height="38" fill="#5fcf5f"/>
<rect x="43" y="497" width="3" height="35" fill="#db7070"/>
<rect x="47" y="486" width="3" height="46" fill="#db7070"/>
<rect x="52" y="521" width="3" height="11" fill="#db7070"/>
<rect x="56" y="519" width="3" height="13" fill="#5fcf5f"/>
<rect x="61" y="505" width="3" height="27" fill="#5fcf5f"/>
<rect x="65" y="462" width="3" height="70" fill="#5fcf5f"/>
<rect x="69" y="506" width="3" height="26" fill="#5fcf5f"/>
<rect x="74" y="451" width="3" height="81" fill="#db7070"/>
<rect x="78" y="520" width="3" height="12" fill="#5fcf5f"/>
<rect x="83" y="517" width="3" height="15" fill="#5fcf5f"/>
<rect x="87" y="508" width="3" height="24" fill="#5fcf5f"/>
<rect x="92" y="511" width="3" height="21" fill="#5fcf5f"/>
<rect x="96" y="523" width="3" height="9" fill="#db7070"/>
<rect x="101" y="523" width="3" height="9" fill="#5fcf5f"/>
<rect x="105" y="472" width="3" height="60" fill="#5fcf5f"/>
<rect x="110" y="493" width="3" height="39" fill="#5fcf5f"/>
<rect x="114" y="505" width="3" height="27" fill="#5fcf5f"/>
<rect x="118" y="481" width="3" height="51" fill="#5fcf5f"/>
<rect x="123" y="497" width="3" height="35" fill="#db7070"/>
<rect x="127" y="510" width="3" height="22" fill="#db7070"/>
<rect x="132" y="522" width="3" height="10" fill="#5fcf5f"/>
<rect x="136" y="519" width="3" height="13" fill="#5fcf5f"/>
<rect x="141" y="483" width="3" height="49" fill="#5fcf5f"/>
<rect x="145" y="514" width="3" height="18" fill="#db7070"/>
<rect x="150" y="522" width="3" height="10" fill="#5fcf5f"/>
<rect x="154" y="520" width="3" height="12" fill="#5fcf5f"/>
<rect x="158" y="514" width="3" height="18" fill="#db7070"/>
<rect x="163" y="503" width="3" height="29" fill="#5fcf5f"/>
<rect x="167" y="523" width="3" height="9" fill="#db7070"/>
<rect x="172" y="507" width="3" height="25" fill="#5fcf5f"/>
<rect x="176" y="523" width="3" height="9" fill="#db7070"/>
<rect x="181" y="520" width="3" height="12" fill="#db7070"/>
<rect x="185" y="514" width="3" height="18" fill="#db7070"/>
<rect x="190" y="520" width="3" height="12" fill="#db7070"/>
<rect x="194" y="519" width="3" height="13" fill="#5fcf5f"/>
<rect x="199" y="482" width="3" height="50" fill="#5fcf5f"/>
<rect x="203" y="511" width="3" height="21" fill="#5fcf5f"/>
<rect x="207" y="522" width="3" height="10" fill="#db7070"/>
<rect x="212" y="513" width="3" height="19" fill="#db7070"/>
<rect x="216" y="520" width="3" height="12" fill="#5fcf5f"/>
<rect x="221" y="524" width="3" height="8" fill="#db7070"/>
<rect x="225" y="514" width="3" height="18" fill="#db7070"/>
<rect x="230" y="481" width="3" height="51" fill="#5fcf5f"/>
<rect x="234" y="523" width="3" height="9" fill="#5fcf5f"/>
<rect x="239" y="516" width="3" height="16" fill="#db7070"/>
<rect x="243" y="514" width="3" height="18" fill="#5fcf5f"/>
<rect x="247" y="514" width="3" height="18" fill="#5fcf5f"/>
<rect x="252" y="500" width="3" height="32" fill="#5fcf5f"/>
<rect x="256" y="510" width="3" height="22" fill="#5fcf5f"/>
<rect x="261" y="518" width="3" height="14" fill="#db7070"/>
<rect x="265" y="520" width="3" height="12" fill="#db7070"/>
<rect x="270" y="522" width="3" height="10" fill="#db7070"/>
<rect x="274" y="525" width="3" height="7" fill="#db7070"/>
<rect x="279" y="524" width="3" height="8" fill="#5fcf5f"/>
<rect x="283" y="519" width="3" height="13" fill="#5fcf5f"/>
<rect x="287" y="510" width="3" height="22" fill="#5fcf5f"/>
<rect x="292" y="523" width="3" height="9" fill="#db7070"/>
<rect x="296" y="505" width="3" height="27" fill="#db7070"/>
<rect x="301" y="525" width="3" height="7" fill="#db7070"/>
<rect x="305" y="512" width="3" height="20" fill="#db7070"/>
<rect x="310" y="512" width="3" height="20" fill="#5fcf5f"/>
<rect x="314" y="514" width="3" height="18" fill="#5fcf5f"/>
<rect x="319" y="503" width="3" height="29" fill="#db7070"/>
<rect x="323" y="505" width="3" height="27" fill="#5fcf5f"/>
<rect x="328" y="518" width="3" height="14" fill="#5fcf5f"/>
<rect x="332" y="511" width="3" height="21" fill="#5fcf5f"/>
<rect x="336" y="519" width="3" height="13" fill="#db7070"/>
<rect x="341" y="514" width="3" height="18" fill="#db7070"/>
<rect x="345" y="512" width="3" height="20" fill="#db7070"/>
<rect x="350" y="510" width="3" height="22" fill="#db7070"/>
<rect x="354" y="523" width="3" height="9" fill="#5fcf5f"/>
<rect x="359" y="515" width="3" height="17" fill="#5fcf5f"/>
<rect x="363" y="515" width="3" height="17" fill="#db7070"/>
<rect x="368" y="508" width="3" height="24" fill="#db7070"/>
<rect x="372" y="509" width="3" height="23" fill="#db7070"/>
<rect x="376" y="517" width="3" height="15" fill="#5fcf5f"/>
<rect x="381" y="521" width="3" height="11" fill="#5fcf5f"/>
<rect x="385" y="498" width="3" height="34" fill="#5fcf5f"/>
<rect x="390" y="503" width="3" height="29" fill="#5fcf5f"/>
<rect x="394" y="486" width="3" height="46" fill="#5fcf5f"/>
<rect x="399" y="517" width="3" height="15" fill="#db7070"/>
<rect x="403" y="525" width="3" height="7" fill="#db7070"/>
<rect x="408" y="523" width="3" height="9" fill="#db7070"/>
<rect x="412" y="505" width="3" height="27" fill="#db7070"/>
<rect x="416" y="497" width="3" height="35" fill="#5fcf5f"/>
<rect x="421" y="516" width="3" height="16" fill="#5fcf5f"/>
<rect x="425" y="516" width="3" height="16" fill="#5fcf5f"/>
<rect x="430" y="518" width="3" height="14" fill="#db7070"/>
<rect x="434" y="514" width="3" height="18" fill="#db7070"/>
<rect x="439" y="518" width="3" height="14" fill="#db7070"/>
<rect x="443" y="516" width="3" height="16" fill="#5fcf5f"/>
<rect x="448" y="512" width="3" height="20" fill="#5fcf5f"/>
<rect x="452" y="507" width="3" height="25" fill="#5fcf5f"/>
<rect x="457" y="506" width="3" height="26" fill="#5fcf5f"/>
<rect x="461" y="516" width="3" height="16" fill="#db7070"/>
<rect x="465" y="498" width="3" height="34" fill="#5fcf5f"/>
<rect x="470" y="506" width="3" height="26" fill="#db7070"/>
<rect x="474" y="522" width="3" height="10" fill="#db7070"/>
<rect x="479" y="514" width="3" height="18" fill="#db7070"/>
<rect x="483" y="499" width="3" height="33" fill="#5fcf5f"/>
<rect x="488" y="510" width="3" height="22" fill="#5fcf5f"/>
<rect x="492" y="517" width="3" height="15" fill="#5fcf5f"/>
<rect x="497" y="522" width="3" height="10" fill="#db7070"/>
<rect x="501" y="518" width="3" height="14" fill="#db7070"/>
<rect x="505" y="521" width="3" height="11" fill="#5fcf5f"/>
<rect x="510" y="505" width="3" height="27" fill="#5fcf5f"/>
<rect x="514" y="517" width="3" height="15" fill="#db7070"/>
<rect x="519" y="507" width="3" height="25" fill="#5fcf5f"/>
<rect x="523" y="519" width="3" height="13" fill="#5fcf5f"/>
<rect x="528" y="524" width="3" height="8" fill="#5fcf5f"/>
<rect x="532" y="520" width="3" height="12" fill="#db7070"/>
<rect x="537" y="515" width="3" height="17" fill="#db7070"/>
<rect x="541" y="516" width="3" height="16" fill="#db7070"/>
<rect x="546" y="525" width="3" height="7" fill="#5fcf5f"/>
<rect x="550" y="523" width="3" height="9" fill="#db7070"/>
<rect x="554" y="521" width="3" height="11" fill="#db7070"/>
<rect x="559" y="520" width="3" height="12" fill="#5fcf5f"/>
<rect x="563" y="523" width="3" height="9" fill="#5fcf5f"/>
<rect x="568" y="525" width="3" height="7" fill="#5fcf5f"/>
<rect x="572" y="525" width="3" height="7" fill="#db7070"/>
<rect x="577" y="521" width="3" height="11" fill="#5fcf5f"/>
<rect x="581" y="518" width="3" height="14" fill="#db7070"/>
<rect x="586" y="510" width="3" height="22" fill="#db7070"/>
<rect x="590" y="504" width="3" height="28" fill="#db7070"/>
<rect x="594" y="516" width="3" height="16" fill="#5fcf5f"/>
<rect x="599" y="519" width="3" height="13" fill="#db7070"/>
<rect x="603" y="518" width="3" height="14" fill="#db7070"/>
<rect x="608" y="523" width="3" height="9" fill="#db7070"/>
<rect x="612" y="518" width="3" height="14" fill="#5fcf5f"/>
<rect x="617" y="517" width="3" height="15" fill="#db7070"/>
<rect x="621" y="520" width="3" height="12" fill="#db7070"/>
<rect x="626" y="522" width="3" height="10" fill="#5fcf5f"/>
<rect x="630" y="515" width="3" height="17" fill="#db7070"/>
<rect x="634" y="527" width="3" height="5" fill="#db7070"/>
<rect x="639" y="522" width="3" height="10" fill="#5fcf5f"/>
<rect x="643" y="524" width="3" height="8" fill="#5fcf5f"/>
<rect x="648" y="527" width="3" height="5" fill="#db7070"/>
<rect x="652" y="526" width="3" height="6" fill="#db7070"/>
<rect x="657" y="526" width="3" height="6" fill="#5fcf5f"/>
<rect x="661" y="526" width="3" height="6" fill="#5fcf5f"/>
<rect x="666" y="518" width="3" height="14" fill="#5fcf5f"/>
<rect x="670" y="523" width="3" height="9" fill="#db7070"/>
<rect x="675" y="506" width="3" height="26" fill="#db7070"/>
<rect x="679" y="518" width="3" height="14" fill="#5fcf5f"/>
<rect x="683" y="513" width="3" height="19" fill="#db7070"/>
<rect x="688" y="507" width="3" height="25" fill="#db7070"/>
<rect x="692" y="499" width="3" height="33" fill="#5fcf5f"/>
<rect x="697" y="496" width="3" height="36" fill="#5fcf5f"/>
<rect x="701" y="520" width="3" height="12" fill="#db7070"/>
<rect x="706" y="508" width="3" height="24" fill="#db7070"/>
<rect x="710" y="513" width="3" height="19" fill="#5fcf5f"/>
<rect x="715" y="519" width="3" height="13" fill="#db7070"/>
<rect x="719" y="520" width="3" height="12" fill="#5fcf5f"/>
<rect x="723" y="508" width="3" height="24" fill="#5fcf5f"/>
<rect x="728" y="513" width="3" height="19" fill="#db7070"/>
<rect x="732" y="514" width="3" height="18" fill="#db7070"/>
<rect x="737" y="513" width="3" height="19" fill="#5fcf5f"/>
<rect x="741" y="519" width="3" height="13" fill="#db7070"/>
<rect x="746" y="512" width="3" height="20" fill="#db7070"/>
<rect x="750" y="510" width="3" height="22" fill="#db7070"/>
<rect x="755" y="518" width="3" height="14" fill="#db7070"/>
<rect x="759" y="518" width="3" height="14" fill="#5fcf5f"/>
<rect x="764" y="504" width="3" height="28" fill="#db7070"/>
<rect x="768" y="523" width="3" height="9" fill="#5fcf5f"/>
<rect x="772" y="523" width="3" height="9" fill="#5fcf5f"/>
<rect x="777" y="504" width="3" height="28" fill="#db7070"/>
<rect x="781" y="514" width="3" height="18" fill="#5fcf5f"/>
<rect x="786" y="512" width="3" height="20" fill="#5fcf5f"/>
<rect x="790" y="517" width="3" height="15" fill="#5fcf5f"/>
<rect x="795" y="514" width="3" height="18" fill="#db7070"/>
<rect x="799" y="517" width="3" height="15" fill="#db7070"/>
<rect x="804" y="511" width="3" height="21" fill="#5fcf5f"/>
<rect x="808" y="515" width="3" height="17" fill="#db7070"/>
<rect x="812" y="518" width="3" height="14" fill="#5fcf5f"/>
<rect x="817" y="521" width="3" height="11" fill="#5fcf5f"/>
<rect x="821" y="518" width="3" height="14" fill="#db7070"/>
<rect x="826" y="511" width="3" height="21" fill="#5fcf5f"/>
<rect x="830" y="509" width="3" height="23" fill="#db7070"/>
<rect x="835" y="494" width="3" height="38" fill="#db7070"/>
<rect x="839" y="503" width="3" height="29" fill="#db7070"/>
<rect x="844" y="511" width="3" height="21" fill="#5fcf5f"/>
<rect x="848" y="516" width="3" height="16" fill="#db7070"/>
<rect x="852" y="516" width="3" height="16" fill="#db7070"/>
<rect x="857" y="516" width="3" height="16" fill="#db7070"/>
<rect x="861" y="510" width="3" height="22" fill="#5fcf5f"/>
<rect x="866" y="523" width="3" height="9" fill="#db7070"/>
<rect x="870" y="521" width="3" height="11" fill="#5fcf5f"/>
<rect x="875" y="522" width="3" height="10" fill="#5fcf5f"/>
<rect x="879" y="524" width="3" height="8" fill="#db7070"/>
<rect x="884" y="518" width="3" height="14" fill="#db7070"/>
<rect x="888" y="520" width="3" height="12" fill="#5fcf5f"/>
<rect x="893" y="524" width="3" height="8" fill="#db7070"/>
<rect x="897" y="526" width="3" height="6" fill="#5fcf5f"/>
<rect x="901" y="517" width="3" height="15" fill="#db7070"/>
<rect x="906" y="518" width="3" height="14" fill="#5fcf5f"/>
<rect x="910" y="516" width="3" height="16" fill="#5fcf5f"/>
<rect x="915" y="517" width="3" height="15" fill="#db7070"/>
<rect x="919" y="516" width="3" height="16" fill="#db7070"/>
<rect x="924" y="523" width="3" height="9" fill="#5fcf5f"/>
<rect x="928" y="518" width="3" height="14" fill="#db7070"/>
<rect x="933" y="521" width="3" height="11" fill="#db7070"/>
<rect x="937" y="522" width="3" height="10" fill="#5fcf5f"/>
<rect x="941" y="518" width="3" height="14" fill="#db7070"/>
<rect x="946" y="523" width="3" height="9" fill="#db7070"/>
</g>
<path d="M4.7,514.5 L23.4,514.5 L35.2,514.5 L46.9,512.9 L56.3,513.6 L70.3,512.4 L76.2,510.5 L86.7,510.1 L100.8,511.2 L112.5,509.4 L121.9,508.2 L140.6,508.2 L164.1,508.7 L187.5,508.9 L201.6,508.9 L205.1,507.7 L211.0,508.7 L215.7,507.7 L222.7,508.9 L234.4,508.2 L250.8,508.2 L255.5,507.0 L264.9,507.5 L276.6,509.4 L295.4,509.4 L304.7,511.7 L320.0,512.4 L329.1,512.4 L333.8,511.0 L343.1,513.3 L361.9,514.5 L385.3,514.5 L392.4,513.3 L408.8,513.3 L432.2,513.3 L455.6,513.3 L479.1,513.3 L502.5,513.3 L511.9,512.2 L521.3,512.4 L530.7,513.3 L537.7,512.4 L554.1,514.0 L572.9,514.0 L596.3,514.0 L610.4,514.5 L617.4,514.5 L626.8,515.9 L644.1,515.9 L648.8,517.1 L676.9,517.1 L686.3,518.3 L700.3,517.1 L714.4,517.6 L723.8,518.3 L733.1,517.1 L770.6,517.1 L794.1,516.4 L817.5,516.4 L829.2,515.9 L836.3,515.0 L864.4,515.0 L866.8,514.0 L916.0,514.0 L920.7,515.2 L934.7,515.2 L939.4,516.4 L946.5,516.4" fill="none" stroke="#000" stroke-width="1.1"/>
<g shape-rendering="crispEdges">
<line x1="5" y1="567.5" x2="1307" y2="567.5" stroke="#2a2aa8" stroke-width="1"/>
<line x1="5" y1="641.5" x2="1307" y2="641.5" stroke="#2a2aa8" stroke-width="1"/>
</g>
<g clip-path="url(#cpS)">
<polygon points="4.3,583.5 8.7,565.2 8.7,574.3 4.3,583.5" fill="#7a7cc8"/>
<polygon points="8.7,565.2 13.2,548.7 13.2,565.8 8.7,574.3" fill="#7a7cc8"/>
<polygon points="13.2,548.7 16.6,560.8 13.2,565.8" fill="#7a7cc8"/>
<polygon points="16.6,560.8 17.6,564.3 17.6,559.4" fill="#e6b0b8"/>
<polygon points="17.6,564.3 22.1,577.1 22.1,563.4 17.6,559.4" fill="#e6b0b8"/>
<polygon points="22.1,577.1 25.6,567.7 22.1,563.4" fill="#e6b0b8"/>
<polygon points="25.6,567.7 26.5,565.2 26.5,568.9" fill="#7a7cc8"/>
<polygon points="26.5,565.2 31.0,550.6 31.0,564.3 26.5,568.9" fill="#7a7cc8"/>
<polygon points="31.0,550.6 33.6,563.3 31.0,564.3" fill="#7a7cc8"/>
<polygon points="33.6,563.3 35.4,572.2 35.4,562.6" fill="#e6b0b8"/>
<polygon points="35.4,572.2 38.4,560.2 35.4,562.6" fill="#e6b0b8"/>
<polygon points="38.4,560.2 39.8,554.2 39.8,559.0" fill="#7a7cc8"/>
<polygon points="39.8,554.2 43.0,562.7 39.8,559.0" fill="#7a7cc8"/>
<polygon points="43.0,562.7 44.3,566.1 44.3,564.2" fill="#e6b0b8"/>
<polygon points="44.3,566.1 48.7,574.3 48.7,564.9 44.3,564.2" fill="#e6b0b8"/>
<polygon points="48.7,574.3 53.2,580.8 53.2,573.7 48.7,564.9" fill="#e6b0b8"/>
<polygon points="53.2,580.8 57.6,595.0 57.6,583.4 53.2,573.7" fill="#e6b0b8"/>
<polygon points="57.6,595.0 60.2,583.4 57.6,583.4" fill="#e6b0b8"/>
<polygon points="60.2,583.4 62.1,574.3 62.1,583.4" fill="#7a7cc8"/>
<polygon points="62.1,574.3 66.5,553.3 66.5,574.2 62.1,583.4" fill="#7a7cc8"/>
<polygon points="66.5,553.3 71.0,562.5 71.0,563.4 66.5,574.2" fill="#7a7cc8"/>
<polygon points="71.0,562.5 71.3,563.5 71.0,563.4" fill="#7a7cc8"/>
<polygon points="71.3,563.5 75.4,578.4 75.4,564.7" fill="#e6b0b8"/>
<polygon points="75.4,578.4 78.9,567.5 75.4,564.7" fill="#e6b0b8"/>
<polygon points="78.9,567.5 79.9,564.3 79.9,568.4" fill="#7a7cc8"/>
<polygon points="79.9,564.3 84.3,554.2 84.3,565.6 79.9,568.4" fill="#7a7cc8"/>
<polygon points="84.3,554.2 88.8,552.4 88.8,557.0 84.3,565.6" fill="#7a7cc8"/>
<polygon points="88.8,552.4 90.7,556.7 88.8,557.0" fill="#7a7cc8"/>
<polygon points="90.7,556.7 93.2,562.5 93.2,556.4" fill="#e6b0b8"/>
<polygon points="93.2,562.5 97.7,574.0 97.7,562.9 93.2,556.4" fill="#e6b0b8"/>
<polygon points="97.7,574.0 102.1,573.1 102.1,569.8 97.7,562.9" fill="#e6b0b8"/>
<polygon points="102.1,573.1 103.0,569.2 102.1,569.8" fill="#e6b0b8"/>
<polygon points="103.0,569.2 106.6,553.3 106.6,566.8" fill="#7a7cc8"/>
<polygon points="106.6,553.3 111.0,546.0 111.0,557.4 106.6,566.8" fill="#7a7cc8"/>
<polygon points="111.0,546.0 115.5,544.2 115.5,547.8 111.0,557.4" fill="#7a7cc8"/>
<polygon points="115.5,544.2 117.5,547.5 115.5,547.8" fill="#7a7cc8"/>
<polygon points="117.5,547.5 119.9,551.5 119.9,547.2" fill="#e6b0b8"/>
<polygon points="119.9,551.5 124.4,578.4 124.4,558.0 119.9,547.2" fill="#e6b0b8"/>
<polygon points="124.4,578.4 128.8,578.9 128.8,569.6 124.4,558.0" fill="#e6b0b8"/>
<polygon points="128.8,578.9 132.1,574.9 128.8,569.6" fill="#e6b0b8"/>
<polygon points="132.1,574.9 133.3,573.4 133.3,576.9" fill="#7a7cc8"/>
<polygon points="133.3,573.4 137.7,566.1 137.7,572.8 133.3,576.9" fill="#7a7cc8"/>
<polygon points="137.7,566.1 142.2,563.4 142.2,567.6 137.7,572.8" fill="#7a7cc8"/>
<polygon points="142.2,563.4 143.2,568.6 142.2,567.6" fill="#7a7cc8"/>
<polygon points="143.2,568.6 146.6,586.2 146.6,571.9" fill="#e6b0b8"/>
<polygon points="146.6,586.2 151.1,581.7 151.1,577.1 146.6,571.9" fill="#e6b0b8"/>
<polygon points="151.1,581.7 152.6,578.0 151.1,577.1" fill="#e6b0b8"/>
<polygon points="152.6,578.0 155.5,571.2 155.5,579.7" fill="#7a7cc8"/>
<polygon points="155.5,571.2 160.0,572.5 160.0,575.1 155.5,579.7" fill="#7a7cc8"/>
<polygon points="160.0,572.5 164.4,543.2 164.4,562.3 160.0,575.1" fill="#7a7cc8"/>
<polygon points="164.4,543.2 168.9,553.3 168.9,556.4 164.4,562.3" fill="#7a7cc8"/>
<polygon points="168.9,553.3 173.3,546.0 173.3,547.5 168.9,556.4" fill="#7a7cc8"/>
<polygon points="173.3,546.0 173.6,548.4 173.3,547.5" fill="#7a7cc8"/>
<polygon points="173.6,548.4 177.8,579.8 177.8,559.7" fill="#e6b0b8"/>
<polygon points="177.8,579.8 182.2,582.2 182.2,569.3 177.8,559.7" fill="#e6b0b8"/>
<polygon points="182.2,582.2 186.7,619.2 186.7,593.7 182.2,569.3" fill="#e6b0b8"/>
<polygon points="186.7,619.2 191.1,665.3 191.1,622.2 186.7,593.7" fill="#e6b0b8"/>
<polygon points="191.1,665.3 195.6,655.8 195.6,646.8 191.1,622.2" fill="#e6b0b8"/>
<polygon points="195.6,655.8 196.4,645.6 195.6,646.8" fill="#e6b0b8"/>
<polygon points="196.4,645.6 200.0,599.1 200.0,640.1" fill="#7a7cc8"/>
<polygon points="200.0,599.1 204.5,589.5 204.5,614.8 200.0,640.1" fill="#7a7cc8"/>
<polygon points="204.5,589.5 207.3,606.2 204.5,614.8" fill="#7a7cc8"/>
<polygon points="207.3,606.2 208.9,615.5 208.9,601.4" fill="#e6b0b8"/>
<polygon points="208.9,615.5 213.4,635.3 213.4,613.5 208.9,601.4" fill="#e6b0b8"/>
<polygon points="213.4,635.3 216.3,617.5 213.4,613.5" fill="#e6b0b8"/>
<polygon points="216.3,617.5 217.8,608.2 217.8,619.7" fill="#7a7cc8"/>
<polygon points="217.8,608.2 221.3,622.5 217.8,619.7" fill="#7a7cc8"/>
<polygon points="221.3,622.5 222.2,626.5 222.2,623.3" fill="#e6b0b8"/>
<polygon points="222.2,626.5 226.7,657.3 226.7,630.7 222.2,623.3" fill="#e6b0b8"/>
<polygon points="226.7,657.3 229.8,634.5 226.7,630.7" fill="#e6b0b8"/>
<polygon points="229.8,634.5 231.1,624.7 231.1,636.1" fill="#7a7cc8"/>
<polygon points="231.1,624.7 235.6,607.3 235.6,629.7 231.1,636.1" fill="#7a7cc8"/>
<polygon points="235.6,607.3 238.1,626.9 235.6,629.7" fill="#7a7cc8"/>
<polygon points="238.1,626.9 240.0,642.1 240.0,624.7" fill="#e6b0b8"/>
<polygon points="240.0,642.1 242.8,621.4 240.0,624.7" fill="#e6b0b8"/>
<polygon points="242.8,621.4 244.5,609.1 244.5,619.5" fill="#7a7cc8"/>
<polygon points="244.5,609.1 248.9,612.8 248.9,621.3 244.5,619.5" fill="#7a7cc8"/>
<polygon points="248.9,612.8 253.4,569.8 253.4,597.2 248.9,621.3" fill="#7a7cc8"/>
<polygon points="253.4,569.8 257.8,542.3 257.8,575.0 253.4,597.2" fill="#7a7cc8"/>
<polygon points="257.8,542.3 262.3,552.4 262.3,554.8 257.8,575.0" fill="#7a7cc8"/>
<polygon points="262.3,552.4 263.3,554.1 262.3,554.8" fill="#7a7cc8"/>
<polygon points="263.3,554.1 266.7,560.3 266.7,551.7" fill="#e6b0b8"/>
<polygon points="266.7,560.3 271.2,561.0 271.2,557.9 266.7,551.7" fill="#e6b0b8"/>
<polygon points="271.2,561.0 275.6,566.5 275.6,562.6 271.2,557.9" fill="#e6b0b8"/>
<polygon points="275.6,566.5 279.1,563.1 275.6,562.6" fill="#e6b0b8"/>
<polygon points="279.1,563.1 280.1,562.1 280.1,563.2" fill="#7a7cc8"/>
<polygon points="280.1,562.1 284.5,553.3 284.5,560.6 280.1,563.2" fill="#7a7cc8"/>
<polygon points="284.5,553.3 289.0,554.8 289.0,556.7 284.5,560.6" fill="#7a7cc8"/>
<polygon points="289.0,554.8 290.1,556.7 289.0,556.7" fill="#7a7cc8"/>
<polygon points="290.1,556.7 293.4,562.5 293.4,556.8" fill="#e6b0b8"/>
<polygon points="293.4,562.5 297.9,568.9 297.9,562.0 293.4,556.8" fill="#e6b0b8"/>
<polygon points="297.9,568.9 302.3,584.4 302.3,571.9 297.9,562.0" fill="#e6b0b8"/>
<polygon points="302.3,584.4 306.8,601.8 306.8,585.0 302.3,571.9" fill="#e6b0b8"/>
<polygon points="306.8,601.8 311.2,619.2 311.2,601.8 306.8,585.0" fill="#e6b0b8"/>
<polygon points="311.2,619.2 313.1,600.3 311.2,601.8" fill="#e6b0b8"/>
<polygon points="313.1,600.3 315.7,573.4 315.7,598.1" fill="#7a7cc8"/>
<polygon points="315.7,573.4 320.1,584.0 320.1,592.2 315.7,598.1" fill="#7a7cc8"/>
<polygon points="320.1,584.0 324.6,556.6 324.6,571.4 320.1,592.2" fill="#7a7cc8"/>
<polygon points="324.6,556.6 329.0,557.3 329.0,566.0 324.6,571.4" fill="#7a7cc8"/>
<polygon points="329.0,557.3 333.5,550.6 333.5,554.8 329.0,566.0" fill="#7a7cc8"/>
<polygon points="333.5,550.6 335.1,555.9 333.5,554.8" fill="#7a7cc8"/>
<polygon points="335.1,555.9 337.9,565.2 337.9,557.7" fill="#e6b0b8"/>
<polygon points="337.9,565.2 342.4,575.6 342.4,563.8 337.9,557.7" fill="#e6b0b8"/>
<polygon points="342.4,575.6 346.8,619.2 346.8,586.7 342.4,563.8" fill="#e6b0b8"/>
<polygon points="346.8,619.2 351.3,650.7 351.3,615.2 346.8,586.7" fill="#e6b0b8"/>
<polygon points="351.3,650.7 354.4,624.2 351.3,615.2" fill="#e6b0b8"/>
<polygon points="354.4,624.2 355.7,613.7 355.7,627.9" fill="#7a7cc8"/>
<polygon points="355.7,613.7 360.2,583.5 360.2,616.0 355.7,627.9" fill="#7a7cc8"/>
<polygon points="360.2,583.5 363.9,604.1 360.2,616.0" fill="#7a7cc8"/>
<polygon points="363.9,604.1 364.6,608.2 364.6,601.8" fill="#e6b0b8"/>
<polygon points="364.6,608.2 369.1,621.4 369.1,604.4 364.6,601.8" fill="#e6b0b8"/>
<polygon points="369.1,621.4 373.5,621.0 373.5,616.9 369.1,604.4" fill="#e6b0b8"/>
<polygon points="373.5,621.0 375.8,618.1 373.5,616.9" fill="#e6b0b8"/>
<polygon points="375.8,618.1 378.0,615.5 378.0,619.3" fill="#7a7cc8"/>
<polygon points="378.0,615.5 382.4,606.4 382.4,614.3 378.0,619.3" fill="#7a7cc8"/>
<polygon points="382.4,606.4 386.9,573.4 386.9,598.4 382.4,614.3" fill="#7a7cc8"/>
<polygon points="386.9,573.4 391.3,557.0 391.3,578.9 386.9,598.4" fill="#7a7cc8"/>
<polygon points="391.3,557.0 395.8,551.5 395.8,560.6 391.3,578.9" fill="#7a7cc8"/>
<polygon points="395.8,551.5 400.2,554.2 400.2,554.2 395.8,560.6" fill="#7a7cc8"/>
<polygon points="400.2,554.2 404.7,557.0 404.7,554.2 400.2,554.2" fill="#e6b0b8"/>
<polygon points="404.7,557.0 409.1,558.4 409.1,556.5 404.7,554.2" fill="#e6b0b8"/>
<polygon points="409.1,558.4 413.5,582.6 413.5,566.0 409.1,556.5" fill="#e6b0b8"/>
<polygon points="413.5,582.6 418.0,571.6 418.0,570.9 413.5,566.0" fill="#e6b0b8"/>
<polygon points="418.0,571.6 418.2,570.9 418.0,570.9" fill="#e6b0b8"/>
<polygon points="418.2,570.9 422.4,557.9 422.4,570.7" fill="#7a7cc8"/>
<polygon points="422.4,557.9 426.9,555.1 426.9,561.5 422.4,570.7" fill="#7a7cc8"/>
<polygon points="426.9,555.1 428.8,561.1 426.9,561.5" fill="#7a7cc8"/>
<polygon points="428.8,561.1 431.3,568.9 431.3,560.6" fill="#e6b0b8"/>
<polygon points="431.3,568.9 435.8,608.2 435.8,577.4 431.3,560.6" fill="#e6b0b8"/>
<polygon points="435.8,608.2 440.2,627.4 440.2,601.5 435.8,577.4" fill="#e6b0b8"/>
<polygon points="440.2,627.4 444.7,625.6 444.7,620.4 440.2,601.5" fill="#e6b0b8"/>
<polygon points="444.7,625.6 448.0,624.2 444.7,620.4" fill="#e6b0b8"/>
<polygon points="448.0,624.2 449.1,623.8 449.1,625.6" fill="#7a7cc8"/>
<polygon points="449.1,623.8 453.6,584.4 453.6,611.3 449.1,625.6" fill="#7a7cc8"/>
<polygon points="453.6,584.4 458.0,544.5 458.0,584.2 453.6,611.3" fill="#7a7cc8"/>
<polygon points="458.0,544.5 462.5,548.2 462.5,559.0 458.0,584.2" fill="#7a7cc8"/>
<polygon points="462.5,548.2 466.9,542.7 466.9,545.1 462.5,559.0" fill="#7a7cc8"/>
<polygon points="466.9,542.7 467.7,546.2 466.9,545.1" fill="#7a7cc8"/>
<polygon points="467.7,546.2 471.4,563.4 471.4,551.4" fill="#e6b0b8"/>
<polygon points="471.4,563.4 475.8,569.8 475.8,558.6 471.4,551.4" fill="#e6b0b8"/>
<polygon points="475.8,569.8 480.3,575.6 480.3,569.6 475.8,558.6" fill="#e6b0b8"/>
<polygon points="480.3,575.6 483.6,571.2 480.3,569.6" fill="#e6b0b8"/>
<polygon points="483.6,571.2 484.7,569.8 484.7,571.7" fill="#7a7cc8"/>
<polygon points="484.7,569.8 489.2,561.5 489.2,569.0 484.7,571.7" fill="#7a7cc8"/>
<polygon points="489.2,561.5 493.6,558.8 493.6,563.4 489.2,569.0" fill="#7a7cc8"/>
<polygon points="493.6,558.8 496.2,562.5 493.6,563.4" fill="#7a7cc8"/>
<polygon points="496.2,562.5 498.1,565.2 498.1,561.8" fill="#e6b0b8"/>
<polygon points="498.1,565.2 502.5,578.9 502.5,567.6 498.1,561.8" fill="#e6b0b8"/>
<polygon points="502.5,578.9 507.0,580.4 507.0,574.8 502.5,567.6" fill="#e6b0b8"/>
<polygon points="507.0,580.4 507.8,573.4 507.0,574.8" fill="#e6b0b8"/>
<polygon points="507.8,573.4 511.4,542.3 511.4,567.2" fill="#7a7cc8"/>
<polygon points="511.4,542.3 514.6,566.6 511.4,567.2" fill="#7a7cc8"/>
<polygon points="514.6,566.6 515.9,576.2 515.9,566.3" fill="#e6b0b8"/>
<polygon points="515.9,576.2 520.3,588.4 520.3,569.0 515.9,566.3" fill="#e6b0b8"/>
<polygon points="520.3,588.4 523.7,576.5 520.3,569.0" fill="#e6b0b8"/>
<polygon points="523.7,576.5 524.8,572.5 524.8,579.0" fill="#7a7cc8"/>
<polygon points="524.8,572.5 529.2,570.3 529.2,577.1 524.8,579.0" fill="#7a7cc8"/>
<polygon points="529.2,570.3 530.7,577.5 529.2,577.1" fill="#7a7cc8"/>
<polygon points="530.7,577.5 533.7,591.7 533.7,578.2" fill="#e6b0b8"/>
<polygon points="533.7,591.7 538.1,624.7 538.1,595.6 533.7,578.2" fill="#e6b0b8"/>
<polygon points="538.1,624.7 542.6,650.7 542.6,622.4 538.1,595.6" fill="#e6b0b8"/>
<polygon points="542.6,650.7 545.8,629.9 542.6,622.4" fill="#e6b0b8"/>
<polygon points="545.8,629.9 547.0,622.5 547.0,632.6" fill="#7a7cc8"/>
<polygon points="547.0,622.5 550.1,636.9 547.0,632.6" fill="#7a7cc8"/>
<polygon points="550.1,636.9 551.5,643.0 551.5,638.7" fill="#e6b0b8"/>
<polygon points="551.5,643.0 555.9,653.6 555.9,639.7 551.5,638.7" fill="#e6b0b8"/>
<polygon points="555.9,653.6 557.8,639.3 555.9,639.7" fill="#e6b0b8"/>
<polygon points="557.8,639.3 560.4,620.1 560.4,638.9" fill="#7a7cc8"/>
<polygon points="560.4,620.1 564.8,617.4 564.8,630.4 560.4,638.9" fill="#7a7cc8"/>
<polygon points="564.8,617.4 569.3,615.2 569.3,617.5 564.8,630.4" fill="#7a7cc8"/>
<polygon points="569.3,615.2 573.5,616.4 569.3,617.5" fill="#7a7cc8"/>
<polygon points="573.5,616.4 573.7,616.4 573.7,616.3" fill="#e6b0b8"/>
<polygon points="573.7,616.4 573.8,616.3 573.7,616.3" fill="#e6b0b8"/>
<polygon points="573.8,616.3 578.2,603.6 578.2,611.7" fill="#7a7cc8"/>
<polygon points="578.2,603.6 579.9,613.5 578.2,611.7" fill="#7a7cc8"/>
<polygon points="579.9,613.5 582.6,628.3 582.6,616.1" fill="#e6b0b8"/>
<polygon points="582.6,628.3 587.1,632.9 587.1,621.6 582.6,616.1" fill="#e6b0b8"/>
<polygon points="587.1,632.9 591.5,636.6 591.5,632.6 587.1,621.6" fill="#e6b0b8"/>
<polygon points="591.5,636.6 592.0,631.1 591.5,632.6" fill="#e6b0b8"/>
<polygon points="592.0,631.1 595.9,587.2 595.9,618.9" fill="#7a7cc8"/>
<polygon points="595.9,587.2 600.4,600.0 600.4,607.9 595.9,618.9" fill="#7a7cc8"/>
<polygon points="600.4,600.0 602.7,602.3 600.4,607.9" fill="#7a7cc8"/>
<polygon points="602.7,602.3 604.8,604.5 604.8,597.2" fill="#e6b0b8"/>
<polygon points="604.8,604.5 609.3,615.5 609.3,606.7 604.8,597.2" fill="#e6b0b8"/>
<polygon points="609.3,615.5 613.2,609.1 609.3,606.7" fill="#e6b0b8"/>
<polygon points="613.2,609.1 613.7,608.2 613.7,609.4" fill="#7a7cc8"/>
<polygon points="613.7,608.2 614.1,610.2 613.7,609.4" fill="#7a7cc8"/>
<polygon points="614.1,610.2 618.2,632.0 618.2,618.6" fill="#e6b0b8"/>
<polygon points="618.2,632.0 622.6,641.1 622.6,627.1 618.2,618.6" fill="#e6b0b8"/>
<polygon points="622.6,641.1 625.5,630.5 622.6,627.1" fill="#e6b0b8"/>
<polygon points="625.5,630.5 627.1,624.3 627.1,632.5" fill="#7a7cc8"/>
<polygon points="627.1,624.3 631.5,626.5 631.5,630.7 627.1,632.5" fill="#7a7cc8"/>
<polygon points="631.5,626.5 636.0,624.7 636.0,625.2 631.5,630.7" fill="#7a7cc8"/>
<polygon points="636.0,624.7 640.4,619.2 640.4,623.5 636.0,625.2" fill="#7a7cc8"/>
<polygon points="640.4,619.2 644.9,600.9 644.9,614.9 640.4,623.5" fill="#7a7cc8"/>
<polygon points="644.9,600.9 649.3,593.6 649.3,604.5 644.9,614.9" fill="#7a7cc8"/>
<polygon points="649.3,593.6 651.0,605.1 649.3,604.5" fill="#7a7cc8"/>
<polygon points="651.0,605.1 653.8,623.8 653.8,606.1" fill="#e6b0b8"/>
<polygon points="653.8,623.8 658.2,611.9 658.2,609.7 653.8,606.1" fill="#e6b0b8"/>
<polygon points="658.2,611.9 659.0,610.2 658.2,609.7" fill="#e6b0b8"/>
<polygon points="659.0,610.2 662.7,601.8 662.7,612.5" fill="#7a7cc8"/>
<polygon points="662.7,601.8 667.1,567.6 667.1,593.7 662.7,612.5" fill="#7a7cc8"/>
<polygon points="667.1,567.6 671.1,586.9 667.1,593.7" fill="#7a7cc8"/>
<polygon points="671.1,586.9 671.6,589.0 671.6,586.1" fill="#e6b0b8"/>
<polygon points="671.6,589.0 676.0,612.8 676.0,589.8 671.6,586.1" fill="#e6b0b8"/>
<polygon points="676.0,612.8 679.3,594.8 676.0,589.8" fill="#e6b0b8"/>
<polygon points="679.3,594.8 680.5,588.1 680.5,596.6" fill="#7a7cc8"/>
<polygon points="680.5,588.1 682.2,600.7 680.5,596.6" fill="#7a7cc8"/>
<polygon points="682.2,600.7 684.9,621.0 684.9,607.3" fill="#e6b0b8"/>
<polygon points="684.9,621.0 689.4,626.5 689.4,611.9 684.9,607.3" fill="#e6b0b8"/>
<polygon points="689.4,626.5 693.8,644.8 693.8,630.8 689.4,611.9" fill="#e6b0b8"/>
<polygon points="693.8,644.8 694.8,626.4 693.8,630.8" fill="#e6b0b8"/>
<polygon points="694.8,626.4 698.3,561.5 698.3,611.0" fill="#7a7cc8"/>
<polygon points="698.3,561.5 702.7,572.5 702.7,593.0 698.3,611.0" fill="#7a7cc8"/>
<polygon points="702.7,572.5 705.3,582.5 702.7,593.0" fill="#7a7cc8"/>
<polygon points="705.3,582.5 707.2,589.9 707.2,574.7" fill="#e6b0b8"/>
<polygon points="707.2,589.9 709.1,573.3 707.2,574.7" fill="#e6b0b8"/>
<polygon points="709.1,573.3 711.6,552.4 711.6,571.6" fill="#7a7cc8"/>
<polygon points="711.6,552.4 714.7,574.3 711.6,571.6" fill="#7a7cc8"/>
<polygon points="714.7,574.3 716.1,584.4 716.1,575.6" fill="#e6b0b8"/>
<polygon points="716.1,584.4 720.5,574.3 720.5,570.4 716.1,575.6" fill="#e6b0b8"/>
<polygon points="720.5,574.3 721.9,571.9 720.5,570.4" fill="#e6b0b8"/>
<polygon points="721.9,571.9 725.0,566.5 725.0,575.1" fill="#7a7cc8"/>
<polygon points="725.0,566.5 729.4,566.5 729.4,569.1 725.0,575.1" fill="#7a7cc8"/>
<polygon points="729.4,566.5 729.7,570.1 729.4,569.1" fill="#7a7cc8"/>
<polygon points="729.7,570.1 733.9,616.4 733.9,583.1" fill="#e6b0b8"/>
<polygon points="733.9,616.4 738.2,590.7 733.9,583.1" fill="#e6b0b8"/>
<polygon points="738.2,590.7 738.3,589.9 738.3,590.9" fill="#7a7cc8"/>
<polygon points="738.3,589.9 742.8,596.3 742.8,600.9 738.3,590.9" fill="#7a7cc8"/>
<polygon points="742.8,596.3 744.2,599.9 742.8,600.9" fill="#7a7cc8"/>
<polygon points="744.2,599.9 747.2,607.3 747.2,597.8" fill="#e6b0b8"/>
<polygon points="747.2,607.3 751.7,622.8 751.7,608.8 747.2,597.8" fill="#e6b0b8"/>
<polygon points="751.7,622.8 756.1,664.6 756.1,631.6 751.7,608.8" fill="#e6b0b8"/>
<polygon points="756.1,664.6 760.6,651.2 760.6,646.2 756.1,631.6" fill="#e6b0b8"/>
<polygon points="760.6,651.2 761.7,647.4 760.6,646.2" fill="#e6b0b8"/>
<polygon points="761.7,647.4 765.0,636.6 765.0,650.8" fill="#7a7cc8"/>
<polygon points="765.0,636.6 769.5,634.7 769.5,640.8 765.0,650.8" fill="#7a7cc8"/>
<polygon points="769.5,634.7 773.9,629.3 773.9,633.5 769.5,640.8" fill="#7a7cc8"/>
<polygon points="773.9,629.3 775.2,634.6 773.9,633.5" fill="#7a7cc8"/>
<polygon points="775.2,634.6 778.3,647.6 778.3,637.2" fill="#e6b0b8"/>
<polygon points="778.3,647.6 781.8,636.9 778.3,637.2" fill="#e6b0b8"/>
<polygon points="781.8,636.9 782.8,633.8 782.8,636.9" fill="#7a7cc8"/>
<polygon points="782.8,633.8 787.2,578.9 787.2,620.1 782.8,636.9" fill="#7a7cc8"/>
<polygon points="787.2,578.9 791.7,552.4 791.7,588.4 787.2,620.1" fill="#7a7cc8"/>
<polygon points="791.7,552.4 796.0,566.7 791.7,588.4" fill="#7a7cc8"/>
<polygon points="796.0,566.7 796.1,567.0 796.1,566.1" fill="#e6b0b8"/>
<polygon points="796.1,567.0 800.6,584.4 800.6,567.9 796.1,566.1" fill="#e6b0b8"/>
<polygon points="800.6,584.4 802.5,566.7 800.6,567.9" fill="#e6b0b8"/>
<polygon points="802.5,566.7 805.0,544.2 805.0,565.2" fill="#7a7cc8"/>
<polygon points="805.0,544.2 809.5,557.9 809.5,562.1 805.0,565.2" fill="#7a7cc8"/>
<polygon points="809.5,557.9 812.0,556.9 809.5,562.1" fill="#7a7cc8"/>
<polygon points="812.0,556.9 813.9,556.0 813.9,552.7" fill="#e6b0b8"/>
<polygon points="813.9,556.0 818.4,559.7 818.4,557.9 813.9,552.7" fill="#e6b0b8"/>
<polygon points="818.4,559.7 822.8,586.2 822.8,567.3 818.4,557.9" fill="#e6b0b8"/>
<polygon points="822.8,586.2 826.7,571.1 822.8,567.3" fill="#e6b0b8"/>
<polygon points="826.7,571.1 827.3,568.9 827.3,571.6" fill="#7a7cc8"/>
<polygon points="827.3,568.9 828.2,573.9 827.3,571.6" fill="#7a7cc8"/>
<polygon points="828.2,573.9 831.7,593.6 831.7,582.9" fill="#e6b0b8"/>
<polygon points="831.7,593.6 836.2,660.4 836.2,607.6 831.7,582.9" fill="#e6b0b8"/>
<polygon points="836.2,660.4 840.6,647.6 840.6,633.8 836.2,607.6" fill="#e6b0b8"/>
<polygon points="840.6,647.6 842.6,638.8 840.6,633.8" fill="#e6b0b8"/>
<polygon points="842.6,638.8 845.1,627.4 845.1,645.1" fill="#7a7cc8"/>
<polygon points="845.1,627.4 849.5,634.7 849.5,636.6 845.1,645.1" fill="#7a7cc8"/>
<polygon points="849.5,634.7 850.3,636.4 849.5,636.6" fill="#7a7cc8"/>
<polygon points="850.3,636.4 854.0,644.8 854.0,635.7" fill="#e6b0b8"/>
<polygon points="854.0,644.8 858.4,647.0 858.4,642.2 854.0,635.7" fill="#e6b0b8"/>
<polygon points="858.4,647.0 858.9,640.4 858.4,642.2" fill="#e6b0b8"/>
<polygon points="858.9,640.4 862.9,587.2 862.9,626.3" fill="#7a7cc8"/>
<polygon points="862.9,587.2 867.3,610.0 867.3,614.7 862.9,626.3" fill="#7a7cc8"/>
<polygon points="867.3,610.0 871.8,594.5 871.8,597.2 867.3,614.7" fill="#7a7cc8"/>
<polygon points="871.8,594.5 876.2,583.5 876.2,596.0 871.8,597.2" fill="#7a7cc8"/>
<polygon points="876.2,583.5 879.5,592.4 876.2,596.0" fill="#7a7cc8"/>
<polygon points="879.5,592.4 880.7,595.4 880.7,591.1" fill="#e6b0b8"/>
<polygon points="880.7,595.4 885.1,601.3 885.1,593.4 880.7,591.1" fill="#e6b0b8"/>
<polygon points="885.1,601.3 886.6,592.4 885.1,593.4" fill="#e6b0b8"/>
<polygon points="886.6,592.4 889.6,574.3 889.6,590.3" fill="#7a7cc8"/>
<polygon points="889.6,574.3 894.0,574.0 894.0,583.2 889.6,590.3" fill="#7a7cc8"/>
<polygon points="894.0,574.0 898.5,567.9 898.5,572.1 894.0,583.2" fill="#7a7cc8"/>
<polygon points="898.5,567.9 899.4,573.5 898.5,572.1" fill="#7a7cc8"/>
<polygon points="899.4,573.5 902.9,593.6 902.9,578.5" fill="#e6b0b8"/>
<polygon points="902.9,593.6 906.4,578.6 902.9,578.5" fill="#e6b0b8"/>
<polygon points="906.4,578.6 907.4,574.3 907.4,578.6" fill="#7a7cc8"/>
<polygon points="907.4,574.3 911.8,553.3 911.8,573.7 907.4,578.6" fill="#7a7cc8"/>
<polygon points="911.8,553.3 913.6,575.7 911.8,573.7" fill="#7a7cc8"/>
<polygon points="913.6,575.7 916.3,608.2 916.3,578.6" fill="#e6b0b8"/>
<polygon points="916.3,608.2 920.7,643.3 920.7,601.6 916.3,578.6" fill="#e6b0b8"/>
<polygon points="920.7,643.3 925.2,634.7 925.2,628.8 920.7,601.6" fill="#e6b0b8"/>
<polygon points="925.2,634.7 929.6,650.3 929.6,642.8 925.2,628.8" fill="#e6b0b8"/>
<polygon points="929.6,650.3 934.1,645.7 934.1,643.6 929.6,642.8" fill="#e6b0b8"/>
<polygon points="934.1,645.7 934.6,643.2 934.1,643.6" fill="#e6b0b8"/>
<polygon points="934.6,643.2 938.5,624.3 938.5,640.1" fill="#7a7cc8"/>
<polygon points="938.5,624.3 941.7,638.8 938.5,640.1" fill="#7a7cc8"/>
<polygon points="941.7,638.8 943.0,644.8 943.0,638.3" fill="#e6b0b8"/>
<polygon points="943.0,644.8 947.4,648.5 947.4,639.2 943.0,638.3" fill="#e6b0b8"/>
<path d="M4.3,583.5 L8.7,565.2 L13.2,548.7 L17.6,564.3 L22.1,577.1 L26.5,565.2 L31.0,550.6 L35.4,572.2 L39.8,554.2 L44.3,566.1 L48.7,574.3 L53.2,580.8 L57.6,595.0 L62.1,574.3 L66.5,553.3 L71.0,562.5 L75.4,578.4 L79.9,564.3 L84.3,554.2 L88.8,552.4 L93.2,562.5 L97.7,574.0 L102.1,573.1 L106.6,553.3 L111.0,546.0 L115.5,544.2 L119.9,551.5 L124.4,578.4 L128.8,578.9 L133.3,573.4 L137.7,566.1 L142.2,563.4 L146.6,586.2 L151.1,581.7 L155.5,571.2 L160.0,572.5 L164.4,543.2 L168.9,553.3 L173.3,546.0 L177.8,579.8 L182.2,582.2 L186.7,619.2 L191.1,665.3 L195.6,655.8 L200.0,599.1 L204.5,589.5 L208.9,615.5 L213.4,635.3 L217.8,608.2 L222.2,626.5 L226.7,657.3 L231.1,624.7 L235.6,607.3 L240.0,642.1 L244.5,609.1 L248.9,612.8 L253.4,569.8 L257.8,542.3 L262.3,552.4 L266.7,560.3 L271.2,561.0 L275.6,566.5 L280.1,562.1 L284.5,553.3 L289.0,554.8 L293.4,562.5 L297.9,568.9 L302.3,584.4 L306.8,601.8 L311.2,619.2 L315.7,573.4 L320.1,584.0 L324.6,556.6 L329.0,557.3 L333.5,550.6 L337.9,565.2 L342.4,575.6 L346.8,619.2 L351.3,650.7 L355.7,613.7 L360.2,583.5 L364.6,608.2 L369.1,621.4 L373.5,621.0 L378.0,615.5 L382.4,606.4 L386.9,573.4 L391.3,557.0 L395.8,551.5 L400.2,554.2 L404.7,557.0 L409.1,558.4 L413.5,582.6 L418.0,571.6 L422.4,557.9 L426.9,555.1 L431.3,568.9 L435.8,608.2 L440.2,627.4 L444.7,625.6 L449.1,623.8 L453.6,584.4 L458.0,544.5 L462.5,548.2 L466.9,542.7 L471.4,563.4 L475.8,569.8 L480.3,575.6 L484.7,569.8 L489.2,561.5 L493.6,558.8 L498.1,565.2 L502.5,578.9 L507.0,580.4 L511.4,542.3 L515.9,576.2 L520.3,588.4 L524.8,572.5 L529.2,570.3 L533.7,591.7 L538.1,624.7 L542.6,650.7 L547.0,622.5 L551.5,643.0 L555.9,653.6 L560.4,620.1 L564.8,617.4 L569.3,615.2 L573.7,616.4 L578.2,603.6 L582.6,628.3 L587.1,632.9 L591.5,636.6 L595.9,587.2 L600.4,600.0 L604.8,604.5 L609.3,615.5 L613.7,608.2 L618.2,632.0 L622.6,641.1 L627.1,624.3 L631.5,626.5 L636.0,624.7 L640.4,619.2 L644.9,600.9 L649.3,593.6 L653.8,623.8 L658.2,611.9 L662.7,601.8 L667.1,567.6 L671.6,589.0 L676.0,612.8 L680.5,588.1 L684.9,621.0 L689.4,626.5 L693.8,644.8 L698.3,561.5 L702.7,572.5 L707.2,589.9 L711.6,552.4 L716.1,584.4 L720.5,574.3 L725.0,566.5 L729.4,566.5 L733.9,616.4 L738.3,589.9 L742.8,596.3 L747.2,607.3 L751.7,622.8 L756.1,664.6 L760.6,651.2 L765.0,636.6 L769.5,634.7 L773.9,629.3 L778.3,647.6 L782.8,633.8 L787.2,578.9 L791.7,552.4 L796.1,567.0 L800.6,584.4 L805.0,544.2 L809.5,557.9 L813.9,556.0 L818.4,559.7 L822.8,586.2 L827.3,568.9 L831.7,593.6 L836.2,660.4 L840.6,647.6 L845.1,627.4 L849.5,634.7 L854.0,644.8 L858.4,647.0 L862.9,587.2 L867.3,610.0 L871.8,594.5 L876.2,583.5 L880.7,595.4 L885.1,601.3 L889.6,574.3 L894.0,574.0 L898.5,567.9 L902.9,593.6 L907.4,574.3 L911.8,553.3 L916.3,608.2 L920.7,643.3 L925.2,634.7 L929.6,650.3 L934.1,645.7 L938.5,624.3 L943.0,644.8 L947.4,648.5" fill="none" stroke="#141432" stroke-width="1.1" stroke-linejoin="miter"/>
<path d="M4.3,583.5 L8.7,574.3 L13.2,565.8 L17.6,559.4 L22.1,563.4 L26.5,568.9 L31.0,564.3 L35.4,562.6 L39.8,559.0 L44.3,564.2 L48.7,564.9 L53.2,573.7 L57.6,583.4 L62.1,583.4 L66.5,574.2 L71.0,563.4 L75.4,564.7 L79.9,568.4 L84.3,565.6 L88.8,557.0 L93.2,556.4 L97.7,562.9 L102.1,569.8 L106.6,566.8 L111.0,557.4 L115.5,547.8 L119.9,547.2 L124.4,558.0 L128.8,569.6 L133.3,576.9 L137.7,572.8 L142.2,567.6 L146.6,571.9 L151.1,577.1 L155.5,579.7 L160.0,575.1 L164.4,562.3 L168.9,556.4 L173.3,547.5 L177.8,559.7 L182.2,569.3 L186.7,593.7 L191.1,622.2 L195.6,646.8 L200.0,640.1 L204.5,614.8 L208.9,601.4 L213.4,613.5 L217.8,619.7 L222.2,623.3 L226.7,630.7 L231.1,636.1 L235.6,629.7 L240.0,624.7 L244.5,619.5 L248.9,621.3 L253.4,597.2 L257.8,575.0 L262.3,554.8 L266.7,551.7 L271.2,557.9 L275.6,562.6 L280.1,563.2 L284.5,560.6 L289.0,556.7 L293.4,556.8 L297.9,562.0 L302.3,571.9 L306.8,585.0 L311.2,601.8 L315.7,598.1 L320.1,592.2 L324.6,571.4 L329.0,566.0 L333.5,554.8 L337.9,557.7 L342.4,563.8 L346.8,586.7 L351.3,615.2 L355.7,627.9 L360.2,616.0 L364.6,601.8 L369.1,604.4 L373.5,616.9 L378.0,619.3 L382.4,614.3 L386.9,598.4 L391.3,578.9 L395.8,560.6 L400.2,554.2 L404.7,554.2 L409.1,556.5 L413.5,566.0 L418.0,570.9 L422.4,570.7 L426.9,561.5 L431.3,560.6 L435.8,577.4 L440.2,601.5 L444.7,620.4 L449.1,625.6 L453.6,611.3 L458.0,584.2 L462.5,559.0 L466.9,545.1 L471.4,551.4 L475.8,558.6 L480.3,569.6 L484.7,571.7 L489.2,569.0 L493.6,563.4 L498.1,561.8 L502.5,567.6 L507.0,574.8 L511.4,567.2 L515.9,566.3 L520.3,569.0 L524.8,579.0 L529.2,577.1 L533.7,578.2 L538.1,595.6 L542.6,622.4 L547.0,632.6 L551.5,638.7 L555.9,639.7 L560.4,638.9 L564.8,630.4 L569.3,617.5 L573.7,616.3 L578.2,611.7 L582.6,616.1 L587.1,621.6 L591.5,632.6 L595.9,618.9 L600.4,607.9 L604.8,597.2 L609.3,606.7 L613.7,609.4 L618.2,618.6 L622.6,627.1 L627.1,632.5 L631.5,630.7 L636.0,625.2 L640.4,623.5 L644.9,614.9 L649.3,604.5 L653.8,606.1 L658.2,609.7 L662.7,612.5 L667.1,593.7 L671.6,586.1 L676.0,589.8 L680.5,596.6 L684.9,607.3 L689.4,611.9 L693.8,630.8 L698.3,611.0 L702.7,593.0 L707.2,574.7 L711.6,571.6 L716.1,575.6 L720.5,570.4 L725.0,575.1 L729.4,569.1 L733.9,583.1 L738.3,590.9 L742.8,600.9 L747.2,597.8 L751.7,608.8 L756.1,631.6 L760.6,646.2 L765.0,650.8 L769.5,640.8 L773.9,633.5 L778.3,637.2 L782.8,636.9 L787.2,620.1 L791.7,588.4 L796.1,566.1 L800.6,567.9 L805.0,565.2 L809.5,562.1 L813.9,552.7 L818.4,557.9 L822.8,567.3 L827.3,571.6 L831.7,582.9 L836.2,607.6 L840.6,633.8 L845.1,645.1 L849.5,636.6 L854.0,635.7 L858.4,642.2 L862.9,626.3 L867.3,614.7 L871.8,597.2 L876.2,596.0 L880.7,591.1 L885.1,593.4 L889.6,590.3 L894.0,583.2 L898.5,572.1 L902.9,578.5 L907.4,578.6 L911.8,573.7 L916.3,578.6 L920.7,601.6 L925.2,628.8 L929.6,642.8 L934.1,643.6 L938.5,640.1 L943.0,638.3 L947.4,639.2" fill="none" stroke="#3ccc14" stroke-width="3.2" stroke-linejoin="round"/>
</g>
<g shape-rendering="crispEdges" stroke="#5a6a72" stroke-width="1">
<line x1="1307" y1="427.5" x2="1310" y2="427.5"/>
<line x1="1307" y1="405.5" x2="1312" y2="405.5"/>
<line x1="1307" y1="383.5" x2="1310" y2="383.5"/>
<line x1="1307" y1="361.5" x2="1312" y2="361.5"/>
<line x1="1307" y1="339.5" x2="1310" y2="339.5"/>
<line x1="1307" y1="317.5" x2="1312" y2="317.5"/>
<line x1="1307" y1="295.5" x2="1310" y2="295.5"/>
<line x1="1307" y1="273.5" x2="1312" y2="273.5"/>
<line x1="1307" y1="251.5" x2="1310" y2="251.5"/>
<line x1="1307" y1="228.5" x2="1312" y2="228.5"/>
<line x1="1307" y1="206.5" x2="1310" y2="206.5"/>
<line x1="1307" y1="184.5" x2="1312" y2="184.5"/>
<line x1="1307" y1="162.5" x2="1310" y2="162.5"/>
<line x1="1307" y1="140.5" x2="1312" y2="140.5"/>
<line x1="1307" y1="118.5" x2="1310" y2="118.5"/>
<line x1="1307" y1="96.5" x2="1312" y2="96.5"/>
<line x1="1307" y1="74.5" x2="1310" y2="74.5"/>
</g>
<text x="1313" y="100.3" font-size="11" fill="#000">7.8</text>
<text x="1313" y="144.5" font-size="11" fill="#000">7.6</text>
<text x="1313" y="188.6" font-size="11" fill="#000">7.4</text>
<text x="1313" y="232.7" font-size="11" fill="#000">7.2</text>
<text x="1313" y="321.1" font-size="11" fill="#000">6.8</text>
<text x="1313" y="365.2" font-size="11" fill="#000">6.6</text>
<text x="1313" y="409.3" font-size="11" fill="#000">6.4</text>
<line x1="1307" y1="196.5" x2="1311" y2="196.5" stroke="#22aadd" stroke-width="1"/>
<rect x="1311.5" y="188.0" width="36" height="14.5" fill="url(#gLbl)" stroke="#8d9aa6" stroke-width="1"/>
<text x="1313.8" y="199.6" font-size="11" fill="#30b8e8" textLength="31" lengthAdjust="spacingAndGlyphs">7.3287</text>
<rect x="1311.5" y="202.5" width="36" height="15" fill="url(#gLbl)" stroke="#8d9aa6" stroke-width="1"/>
<text x="1313.8" y="214.6" font-size="11" fill="#1a2acc" textLength="31" lengthAdjust="spacingAndGlyphs">7.3065</text>
<line x1="1307" y1="257.5" x2="1311" y2="257.5" stroke="#55dd33" stroke-width="1"/>
<rect x="1311.5" y="250.5" width="36" height="14" fill="url(#gLbl)" stroke="#8d9aa6" stroke-width="1"/>
<text x="1313.8" y="261.6" font-size="11" fill="#6ee04a" textLength="31" lengthAdjust="spacingAndGlyphs">7.0555</text>
<line x1="1307" y1="268" x2="1311" y2="268" stroke="#000" stroke-width="2"/>
<rect x="1311.5" y="264.5" width="30" height="14" fill="#f5b70a" stroke="#b58a10" stroke-width="1"/>
<text x="1313.8" y="275.6" font-size="11" fill="#000" font-weight="bold" textLength="25" lengthAdjust="spacingAndGlyphs">7.021</text>
<g shape-rendering="crispEdges" stroke="#5a6a72" stroke-width="1">
<line x1="1307" y1="506.5" x2="1312" y2="506.5"/>
<line x1="1307" y1="479.5" x2="1312" y2="479.5"/>
<line x1="1307" y1="453.5" x2="1312" y2="453.5"/>
</g>
<text x="1314" y="458.3" font-size="11" fill="#000">3,000k</text>
<text x="1314" y="484.6" font-size="11" fill="#000">2,000k</text>
<text x="1314" y="509.5" font-size="11" fill="#000">1,000k</text>
<line x1="1307" y1="516" x2="1311" y2="516" stroke="#000" stroke-width="1.5"/>
<rect x="1311.5" y="504.5" width="42" height="13" fill="url(#gLbl)" stroke="#8d9aa6" stroke-width="1"/>
<text x="1313.8" y="514.6" font-size="11" fill="#000" textLength="37" lengthAdjust="spacingAndGlyphs">622,009</text>
<line x1="1307" y1="523.5" x2="1311" y2="523.5" stroke="#d06070" stroke-width="1"/>
<rect x="1311.5" y="517.5" width="42" height="14" fill="url(#gLbl)" stroke="#8d9aa6" stroke-width="1"/>
<text x="1313.8" y="528.6" font-size="11" fill="#e0707c" textLength="37" lengthAdjust="spacingAndGlyphs">352,823</text>
<g shape-rendering="crispEdges" stroke="#5a6a72" stroke-width="1">
<line x1="1307" y1="665.5" x2="1312" y2="665.5"/>
<line x1="1307" y1="653.5" x2="1310" y2="653.5"/>
<line x1="1307" y1="640.5" x2="1312" y2="640.5"/>
<line x1="1307" y1="628.5" x2="1310" y2="628.5"/>
<line x1="1307" y1="616.5" x2="1312" y2="616.5"/>
<line x1="1307" y1="604.5" x2="1310" y2="604.5"/>
<line x1="1307" y1="592.5" x2="1312" y2="592.5"/>
<line x1="1307" y1="579.5" x2="1310" y2="579.5"/>
<line x1="1307" y1="567.5" x2="1312" y2="567.5"/>
<line x1="1307" y1="555.5" x2="1310" y2="555.5"/>
<line x1="1307" y1="542.5" x2="1312" y2="542.5"/>
</g>
<text x="1313" y="547.0" font-size="12" font-weight="bold" fill="#000">100</text>
<text x="1314" y="571.3" font-size="11" fill="#000">80</text>
<text x="1314" y="595.8" font-size="11" fill="#000">60</text>
<text x="1314" y="620.3" font-size="11" fill="#000">40</text>
<text x="1314" y="644.8" font-size="11" fill="#000">20</text>
<text x="1314" y="669.3" font-size="11" fill="#000">0</text>
<line x1="1307" y1="638.5" x2="1311" y2="638.5" stroke="#55dd33" stroke-width="1"/>
<rect x="1311.5" y="628.5" width="36" height="15" fill="url(#gLbl)" stroke="#8d9aa6" stroke-width="1"/>
<text x="1313.8" y="640.6" font-size="11" fill="#55cc33" textLength="31" lengthAdjust="spacingAndGlyphs">21.696</text>
<line x1="1307" y1="647.5" x2="1311" y2="647.5" stroke="#000" stroke-width="1"/>
<rect x="1311.5" y="643.5" width="36" height="15" fill="url(#gLbl)" stroke="#8d9aa6" stroke-width="1"/>
<text x="1313.8" y="655.6" font-size="11" fill="#000" textLength="31" lengthAdjust="spacingAndGlyphs">14.211</text>
<g shape-rendering="crispEdges" stroke="#5a6a72" stroke-width="1">
<line x1="48.5" y1="672" x2="48.5" y2="676"/>
<line x1="146.5" y1="672" x2="146.5" y2="676"/>
<line x1="235.5" y1="672" x2="235.5" y2="676"/>
<line x1="324.5" y1="672" x2="324.5" y2="676"/>
<line x1="422.5" y1="672" x2="422.5" y2="676"/>
<line x1="524.5" y1="672" x2="524.5" y2="676"/>
<line x1="618.5" y1="672" x2="618.5" y2="676"/>
<line x1="716.5" y1="672" x2="716.5" y2="676"/>
<line x1="813.5" y1="672" x2="813.5" y2="676"/>
<line x1="907.5" y1="672" x2="907.5" y2="676"/>
<line x1="1005.5" y1="672" x2="1005.5" y2="676"/>
<line x1="1097.5" y1="672" x2="1097.5" y2="676"/>
<line x1="1192.5" y1="672" x2="1192.5" y2="676"/>
</g>
<text x="48" y="688.700" font-size="11" fill="#222" text-anchor="middle">Mar</text>
<text x="146.5" y="688.700" font-size="11" fill="#222" text-anchor="middle">Apr</text>
<text x="235" y="688.700" font-size="11" fill="#222" text-anchor="middle">May</text>
<text x="324" y="688.700" font-size="11" fill="#222" text-anchor="middle">Jun</text>
<text x="422.5" y="688.700" font-size="11" fill="#222" text-anchor="middle">Jul</text>
<text x="524" y="688.700" font-size="11" fill="#222" text-anchor="middle">Aug</text>
<text x="618" y="688.700" font-size="11" fill="#222" text-anchor="middle">Sep</text>
<text x="716" y="688.700" font-size="11" fill="#222" text-anchor="middle">Oct</text>
<text x="813" y="688.700" font-size="11" fill="#222" text-anchor="middle">Nov</text>
<text x="907" y="688.700" font-size="11" fill="#222" text-anchor="middle">Dec</text>
<text x="1005" y="688.700" font-size="12" font-weight="bold" fill="#222" text-anchor="middle">2016</text>
<text x="1097" y="688.700" font-size="11" fill="#222" text-anchor="middle">Feb</text>
<text x="1192" y="688.700" font-size="11" fill="#222" text-anchor="middle">Mar</text>
<rect x="5.5" y="57.5" width="120" height="18" fill="url(#gTab)" stroke="#7f9fae" stroke-width="1"/>
<text x="8.5" y="69.8" font-size="11" fill="#000" textLength="23" lengthAdjust="spacingAndGlyphs">Price</text>
<g transform="translate(44,67)"><path d="M-6.2,5.2 L-0.8,-0.4 C-1.8,-3.2 0.2,-6.3 3.4,-6.3 L1.6,-3.6 L3.2,-1.6 L6.2,-2.4 C6.2,1 3,2.6 0.6,1.6 L-4.6,6.8 Z" fill="#fff" stroke="#111" stroke-width="1.1" stroke-linejoin="round"/></g>
<g transform="translate(61,67)"><rect x="-6" y="-6" width="12" height="12.5" rx="1.5" fill="#fff" stroke="#111" stroke-width="1.3"/><rect x="-6" y="-6" width="12" height="3.6" rx="1" fill="#111"/></g>
<g transform="translate(79,67)"><circle r="6.2" fill="#333" stroke="#1a1a1a" stroke-width="0.8"/><path d="M-3,-3 L3,3 M3,-3 L-3,3" stroke="#fff" stroke-width="2.2" stroke-linecap="round"/></g>
<g transform="translate(97,67)"><path d="M-5.5,-6 L2.5,-6 L5.5,-3 L5.5,6 L-5.5,6 Z" fill="#e2e4e4" stroke="#b8bcbc" stroke-width="1"/><path d="M0,-3 L0,2.5 M-2.8,0 L0,3.2 L2.8,0" stroke="#b0b4b4" stroke-width="2" fill="none"/></g>
<g transform="translate(115,67)"><path d="M-5.5,-6 L2.5,-6 L5.5,-3 L5.5,6 L-5.5,6 Z" fill="#e2e4e4" stroke="#b8bcbc" stroke-width="1"/><path d="M0,3.5 L0,-2 M-2.8,0.5 L0,-2.8 L2.8,0.5" stroke="#b0b4b4" stroke-width="2" fill="none"/></g>
<rect x="5.5" y="432.5" width="96" height="18" fill="url(#gTab)" stroke="#7f9fae" stroke-width="1"/>
<text x="8.5" y="444.8" font-size="11" fill="#000" textLength="35" lengthAdjust="spacingAndGlyphs">Volume</text>
<g transform="translate(55,442)"><path d="M-6.2,5.2 L-0.8,-0.4 C-1.8,-3.2 0.2,-6.3 3.4,-6.3 L1.6,-3.6 L3.2,-1.6 L6.2,-2.4 C6.2,1 3,2.6 0.6,1.6 L-4.6,6.8 Z" fill="#fff" stroke="#111" stroke-width="1.1" stroke-linejoin="round"/></g>
<g transform="translate(73,442)"><rect x="-6" y="-6" width="12" height="12.5" rx="1.5" fill="#fff" stroke="#111" stroke-width="1.3"/><rect x="-6" y="-6" width="12" height="3.6" rx="1" fill="#111"/></g>
<g transform="translate(91,442)"><circle r="6.2" fill="#333" stroke="#1a1a1a" stroke-width="0.8"/><path d="M-3,-3 L3,3 M3,-3 L-3,3" stroke="#fff" stroke-width="2.2" stroke-linecap="round"/></g>
<rect x="5.5" y="535.5" width="153" height="18" fill="url(#gTab)" stroke="#7f9fae" stroke-width="1"/>
<text x="8.5" y="547.8" font-size="11" fill="#000" textLength="91" lengthAdjust="spacingAndGlyphs">Stochastic (14 1 3)</text>
<g transform="translate(111,545)"><path d="M-6.2,5.2 L-0.8,-0.4 C-1.8,-3.2 0.2,-6.3 3.4,-6.3 L1.6,-3.6 L3.2,-1.6 L6.2,-2.4 C6.2,1 3,2.6 0.6,1.6 L-4.6,6.8 Z" fill="#fff" stroke="#111" stroke-width="1.1" stroke-linejoin="round"/></g>
<g transform="translate(129,545)"><rect x="-6" y="-6" width="12" height="12.5" rx="1.5" fill="#fff" stroke="#111" stroke-width="1.3"/><rect x="-6" y="-6" width="12" height="3.6" rx="1" fill="#111"/></g>
<g transform="translate(147,545)"><circle r="6.2" fill="#333" stroke="#1a1a1a" stroke-width="0.8"/><path d="M-3,-3 L3,3 M3,-3 L-3,3" stroke="#fff" stroke-width="2.2" stroke-linecap="round"/></g>
<g><line x1="7.5" y1="9" x2="7.5" y2="21" stroke="#c03030" stroke-width="1"/><rect x="4.5" y="12.5" width="6" height="6" fill="#f07070" stroke="#c03030"/><line x1="15.5" y1="5" x2="15.5" y2="21" stroke="#208020" stroke-width="1"/><rect x="12.5" y="8.5" width="6" height="9" fill="#60d860" stroke="#208020"/></g>
<path d="M24,11 L31.5,11 L27.7,15.5 Z" fill="#000"/>
<text x="35" y="16.600" font-size="11" textLength="21.5" lengthAdjust="spacingAndGlyphs" fill="#14244a">NOS</text>
<rect x="63" y="8" width="10" height="10.5" rx="1.5" fill="#f6f8fa" stroke="#b8c8d0" stroke-width="0.8"/>
<text x="68" y="17" font-size="10" font-weight="bold" fill="#8a9296" text-anchor="middle" font-family="Liberation Serif,serif">i</text>
<text x="79.5" y="16.600" font-size="11" textLength="71" lengthAdjust="spacingAndGlyphs" font-weight="bold" fill="#b01828">7.021 (-0.23%)</text>
<text x="156" y="16.600" font-size="11" textLength="62.5" lengthAdjust="spacingAndGlyphs" font-weight="bold" fill="#000">14-Dec-2015</text>
<text x="225" y="16.600" font-size="11" textLength="55.5" lengthAdjust="spacingAndGlyphs" fill="#101828">NOS, SGPS</text>
<g stroke="#7d9cac" fill="none"><line x1="1320" y1="16" x2="1329" y2="16" stroke-width="2"/><rect x="1338.5" y="9" width="5" height="4" stroke-width="1.4"/><rect x="1335.5" y="12" width="5" height="4" stroke-width="1.4" fill="#b4cedb"/><path d="M1350,9 L1358,17 M1358,9 L1350,17" stroke-width="2"/></g>
<rect x="9" y="28" width="26" height="26" fill="#8aa6b6"/>
<path d="M17,33 L17,47 L20.3,44 L23,50 L25,49 L22.3,43.3 L26.5,43 Z" fill="#fff" stroke="#111" stroke-width="1" stroke-linejoin="round"/>
<g><circle cx="45" cy="38" r="5.4" fill="#e8e8e8" stroke="#111" stroke-width="1.6"/><circle cx="43.8" cy="36.8" r="2.2" fill="#fff"/><path d="M49,42 L55,48" stroke="#111" stroke-width="3" stroke-linecap="round"/></g>
<g transform="translate(73,41) rotate(-42)"><rect x="-10" y="-3.5" width="20" height="7" fill="#f0f0f0" stroke="#222" stroke-width="1"/><path d="M-7,-3.5 v3 M-4,-3.5 v3 M-1,-3.5 v3 M2,-3.5 v3 M5,-3.5 v3 M8,-3.5 v3" stroke="#222" stroke-width="0.8"/></g>
<g><path d="M94,45 C96,43 95,37 99.5,35.5 C104,37 103,43 105,45 Z" fill="#f4e61a" stroke="#111" stroke-width="1"/><circle cx="99.5" cy="47" r="1.5" fill="#f4e61a" stroke="#111" stroke-width="0.8"/><path d="M91.5,35 q-1,2 0,4 M93,34 q-1,2 0,4 M107.5,35 q1,2 0,4 M106,34 q1,2 0,4" stroke="#111" stroke-width="0.8" fill="none"/></g>
<g fill="none"><path d="M116.200,31.600 L136.200,37.700" stroke="#dd1111" stroke-width="1.8"/><path d="M116.200,49.700 L136.200,44" stroke="#11aa11" stroke-width="1.8"/><path d="M118,34 L120.5,46 L123,36 L126,45.500 L129,38 L131.500,44 L134,39.500" stroke="#dd1111" stroke-width="0.9" stroke-dasharray="2 0.8"/><path d="M117,42 L119,47.500 L122,37 L124.500,46 L127.500,38.500 L130,44.500 L133,40" stroke="#11aa11" stroke-width="0.9" stroke-dasharray="2 0.8"/></g>
<g fill="none"><path d="M146.500,33.500 L162,33.500" stroke="#dd1111" stroke-width="2"/><path d="M142.300,47.800 L162,47.800" stroke="#11aa11" stroke-width="2"/><path d="M143.500,43 L147,37.500" stroke="#11aa11" stroke-width="1"/><path d="M147,37.500 L151,45.500" stroke="#dd1111" stroke-width="1"/><path d="M151,45.500 L155.500,37.500" stroke="#11aa11" stroke-width="1"/><path d="M155.500,37.500 L157.500,41" stroke="#dd1111" stroke-width="1"/><path d="M157.500,41 L161,36" stroke="#11aa11" stroke-width="1"/></g>
<g><path d="M173.500,46 L183,37" stroke="#111" stroke-width="1.1"/><path d="M171.89999999999998,45.3 L176.5,45.3 M174.2,43.0 L174.2,47.599999999999994" stroke="#0a0ae0" stroke-width="1.2"/><path d="M180.0,37.3 L184.60000000000002,37.3 M182.3,35.0 L182.3,39.599999999999994" stroke="#0a0ae0" stroke-width="1.2"/></g>
<g><path d="M193.300,51.500 L214.800,30" stroke="#111" stroke-width="1.1"/><path d="M195.7,46.8 L200.3,46.8 M198,44.5 L198,49.099999999999994" stroke="#0a0ae0" stroke-width="1.2"/><path d="M206.2,36.3 L210.8,36.3 M208.5,34.0 L208.5,38.599999999999994" stroke="#0a0ae0" stroke-width="1.2"/></g>
<g><path d="M219,41.500 L241,41.500" stroke="#111" stroke-width="1.2"/><path d="M228,39.5 L232,43.5 M232,39.5 L228,43.5" stroke="#0a0ae0" stroke-width="1.1"/></g>
<g><path d="M256.500,30 L256.500,52" stroke="#111" stroke-width="1.2"/><path d="M254.5,39.5 L258.5,43.5 M258.5,39.5 L254.5,43.5" stroke="#0a0ae0" stroke-width="1.1"/></g>
<g><path d="M273.600,38.800 L290.300,34.500 M273.600,47.800 L290.300,43" stroke="#111" stroke-width="1.1"/><path d="M282.700,44 L282.700,38.500 M280.700,40.500 L282.700,38 L284.700,40.500" stroke="#0a0ae0" stroke-width="1.200" fill="none"/><path d="M270.9,47.8 L275.5,47.8 M273.2,45.5 L273.2,50.099999999999994" stroke="#0a0ae0" stroke-width="1.2"/><path d="M288.0,42.5 L292.6,42.5 M290.3,40.2 L290.3,44.8" stroke="#0a0ae0" stroke-width="1.2"/></g>
<g><path d="M301.700,40.200 L309.400,31.600 M301.700,46.800 L313.200,35.400 M306.500,49.700 L318,39.200 M302.700,36.400 L309.400,48.700" stroke="#111" stroke-width="1.1"/><path d="M301.3,37 L305.90000000000003,37 M303.6,34.7 L303.6,39.3" stroke="#0a0ae0" stroke-width="1.2"/><path d="M297.5,48.4 L302.1,48.4 M299.8,46.1 L299.8,50.699999999999996" stroke="#0a0ae0" stroke-width="1.2"/><path d="M306.09999999999997,48.4 L310.7,48.4 M308.4,46.1 L308.4,50.699999999999996" stroke="#0a0ae0" stroke-width="1.2"/></g>
<g fill="none"><path d="M324,44 L326,38 L329,45 L332,36 L335,43 L338,33.500 L341,40 L344,32.500" stroke="#11aa11" stroke-width="1.1" stroke-dasharray="2.2 1.2"/><path d="M325,47 L327.500,42 L330,48 L333,41 L336,46 L339,38 L342,42" stroke="#dd1111" stroke-width="1" stroke-dasharray="1.6 1.4"/><path d="M324.600,45.900 L344.600,35.400" stroke="#111" stroke-width="1.1"/></g>
<g fill="none"><path d="M355,36.500 h11.500 M355,39.500 h11.500 M355,42.500 h11.500 M355,45.500 h11.500" stroke="#222" stroke-width="1.1"/><path d="M357,39.500 h3 M357,42.500 h3" stroke="#fff" stroke-width="1.1" stroke-dasharray="1 1"/><path d="M355.200,46.800 L370.500,30.600" stroke="#11aa11" stroke-width="1.400"/><path d="M349.500,48.700 q2,-2.500 3,0 q1,2.500 3,-1.900" stroke="#dd1111" stroke-width="1.300"/><path d="M362,42.500 l3,-2" stroke="#dd1111" stroke-width="1.2"/></g>
<g fill="none"><path d="M378.600,46 A7.600,7.600 0 0 1 393.800,46" stroke="#111" stroke-width="1.1"/><path d="M380.900,46 A5.300,5.300 0 0 1 391.500,46" stroke="#111" stroke-width="1.1"/><path d="M383.200,46 A3,3 0 0 1 389.200,46" stroke="#111" stroke-width="1.1"/><path d="M380,47 L397,30.600" stroke="#11aa11" stroke-width="1.400"/><path d="M375.500,48.700 q2,-2.500 3,0 q1,2.500 3,-1.900" stroke="#dd1111" stroke-width="1.300"/></g>
<g><path d="M407.500,46.500 L417.700,36.300" stroke="#0a0ae0" stroke-width="1.200" stroke-dasharray="2 1.2"/><rect x="405.800" y="44.900" width="3.200" height="3.200" fill="#0a0ae0"/><rect x="416" y="34.600" width="3.200" height="3.200" fill="#0a0ae0"/><path d="M410.40000000000003,39.199999999999996 L414.8,43.6 M414.8,39.199999999999996 L410.40000000000003,43.6" stroke="#0a0ae0" stroke-width="1.1"/></g>
<g><path d="M430.400,46.800 L443.700,33.500" stroke="#111" stroke-width="1.1"/><path d="M434.200,49.700 L446.600,37.300" stroke="#0a0ae0" stroke-width="1.1"/><path d="M435.500,40.500 L440.500,43 M438,40.500 L440.800,43.200 L437.500,44.300" stroke="#0a0ae0" stroke-width="1.1" fill="none"/></g>
<g stroke-linecap="round" stroke-linejoin="round"><path d="M459.500,38 L471,48" stroke="#333" stroke-width="4.2" fill="none"/><path d="M459.500,38 L471,48" stroke="#e4e4e4" stroke-width="2.400" fill="none"/><path d="M456.500,38.500 a3.600,3.600 0 1 1 5,-4.500 l-2.500,0.500 l-0.500,2.500 Z" fill="#e4e4e4" stroke="#333" stroke-width="1"/><path d="M457.500,48 L467.500,38" stroke="#333" stroke-width="4" fill="none"/><path d="M457.500,48 L467.500,38" stroke="#d8d8d8" stroke-width="2.200" fill="none"/><path d="M465,34.500 L468.500,32.800 L473.800,38 L472,41.500 Z" fill="#1a1a1a" stroke="#111" stroke-width="1"/></g>
<g><path d="M485.200,38.500 L496.800,38.500 L495.600,49.500 L486.400,49.500 Z" fill="#d0d0d0" stroke="#333" stroke-width="1"/><path d="M484,36 q7,-3.500 14,0 l0,2 l-14,0 Z" fill="#b8b8b8" stroke="#333" stroke-width="1"/><path d="M488.500,33.800 h5" stroke="#333" stroke-width="1.400"/><path d="M488.300,40.500 v7.500 M491,40.500 v7.500 M493.700,40.500 v7.500" stroke="#555" stroke-width="1"/></g>
<g><path d="M509.500,34.500 h14 v11.500 l-2.500,2.500 h-11.500 Z" fill="#fff" stroke="#111" stroke-width="1.300" stroke-linejoin="round"/><path d="M512.500,40 v-2.500 h8 v2.500 M516.500,37.500 v8.500 M514.500,46 h4" stroke="#111" stroke-width="1.500" fill="none"/></g>
<path d="M536,39.500 L542,39.500 L542,36 L548.500,41.500 L542,47 L542,43.500 L536,43.500 Z" fill="#2a2a2a"/>
<path d="M566.500,48 L566.500,41.500 L563.500,41.500 L568.800,34.500 L574,41.500 L571,41.500 L571,48 Z" fill="#2cc02c" stroke="#159015" stroke-width="0.6"/>
<path d="M592.500,35 L592.500,41.500 L589.500,41.500 L594.800,48.500 L600,41.500 L597,41.500 L597,35 Z" fill="#ee1515" stroke="#aa0000" stroke-width="0.6"/>
<g><rect x="612.500" y="36.500" width="16" height="10.500" fill="none" stroke="#111" stroke-width="1.1"/><path d="M609.3,33.3 L613.7,37.7 M613.7,33.3 L609.3,37.7" stroke="#0a0ae0" stroke-width="1.1"/><path d="M626.3,44.8 L630.7,49.2 M630.7,44.8 L626.3,49.2" stroke="#0a0ae0" stroke-width="1.1"/></g>
<g><rect x="638.500" y="36" width="17" height="10.500" rx="5.200" fill="none" stroke="#111" stroke-width="1.1"/><path d="M634.9,35.5 L640.1,35.5 M637.5,32.9 L637.5,38.1" stroke="#0a0ae0" stroke-width="1.2"/><path d="M651.9,47 L657.1,47 M654.5,44.4 L654.5,49.6" stroke="#0a0ae0" stroke-width="1.2"/></g>
<g><path d="M672.400,35.500 L666.500,47.800 L678.800,47.800 Z" fill="none" stroke="#111" stroke-width="1.200"/><path d="M670.0,35 L674.8,35 M672.4,32.6 L672.4,37.4" stroke="#0a0ae0" stroke-width="1.2"/><path d="M663.6,47.8 L668.4,47.8 M666,45.4 L666,50.199999999999996" stroke="#0a0ae0" stroke-width="1.2"/><path d="M676.8000000000001,47.8 L681.6,47.8 M679.2,45.4 L679.2,50.199999999999996" stroke="#0a0ae0" stroke-width="1.2"/></g>
<rect x="687.3" y="31.300" width="10.300" height="9.500" rx="2.200" fill="#ffffff"/>
<rect x="688.1" y="32" width="8.700" height="3.600" rx="1.800" fill="#fff" opacity="0.220"/>
<rect x="698.2" y="31.300" width="10.300" height="9.500" rx="2.200" fill="#dedede"/>
<rect x="699.0" y="32" width="8.700" height="3.600" rx="1.800" fill="#fff" opacity="0.220"/>
<rect x="709.2" y="31.300" width="10.300" height="9.500" rx="2.200" fill="#b4b4b4"/>
<rect x="710.0" y="32" width="8.700" height="3.600" rx="1.800" fill="#fff" opacity="0.220"/>
<rect x="720.1" y="31.300" width="10.300" height="9.500" rx="2.200" fill="#8e8e8e"/>
<rect x="720.9" y="32" width="8.700" height="3.600" rx="1.800" fill="#fff" opacity="0.220"/>
<rect x="731.1" y="31.300" width="10.300" height="9.500" rx="2.200" fill="#686868"/>
<rect x="731.9" y="32" width="8.700" height="3.600" rx="1.800" fill="#fff" opacity="0.220"/>
<rect x="740.5" y="29.500" width="13.500" height="13" rx="2.500" fill="#000" stroke="#333" stroke-width="1"/>
<rect x="742.5" y="30.800" width="9.500" height="4" rx="2" fill="#666" opacity="0.550"/>
<rect x="753.0" y="31.300" width="10.300" height="9.500" rx="2.200" fill="#c4d2ff"/>
<rect x="753.8" y="32" width="8.700" height="3.600" rx="1.800" fill="#fff" opacity="0.220"/>
<rect x="763.9" y="31.300" width="10.300" height="9.500" rx="2.200" fill="#5a8af0"/>
<rect x="764.7" y="32" width="8.700" height="3.600" rx="1.800" fill="#fff" opacity="0.220"/>
<rect x="774.9" y="31.300" width="10.300" height="9.500" rx="2.200" fill="#48aef2"/>
<rect x="775.7" y="32" width="8.700" height="3.600" rx="1.800" fill="#fff" opacity="0.220"/>
<rect x="785.8" y="31.300" width="10.300" height="9.500" rx="2.200" fill="#1212e0"/>
<rect x="786.6" y="32" width="8.700" height="3.600" rx="1.800" fill="#fff" opacity="0.220"/>
<rect x="796.8" y="31.300" width="10.300" height="9.500" rx="2.200" fill="#2222c4"/>
<rect x="797.6" y="32" width="8.700" height="3.600" rx="1.800" fill="#fff" opacity="0.220"/>
<rect x="807.8" y="31.300" width="10.300" height="9.500" rx="2.200" fill="#10109c"/>
<rect x="808.5" y="32" width="8.700" height="3.600" rx="1.800" fill="#fff" opacity="0.220"/>
<rect x="818.7" y="31.300" width="10.300" height="9.500" rx="2.200" fill="#8412b8"/>
<rect x="819.5" y="32" width="8.700" height="3.600" rx="1.800" fill="#fff" opacity="0.220"/>
<rect x="829.6" y="31.300" width="10.300" height="9.500" rx="2.200" fill="#f88cc6"/>
<rect x="830.4" y="32" width="8.700" height="3.600" rx="1.800" fill="#fff" opacity="0.220"/>
<rect x="687.3" y="41.800" width="10.300" height="10" rx="2.200" fill="#e05c5c"/>
<rect x="688.1" y="42.500" width="8.700" height="3.800" rx="1.800" fill="#fff" opacity="0.200"/>
<rect x="698.2" y="41.800" width="10.300" height="10" rx="2.200" fill="#f00404"/>
<rect x="699.0" y="42.500" width="8.700" height="3.800" rx="1.800" fill="#fff" opacity="0.200"/>
<rect x="709.2" y="41.800" width="10.300" height="10" rx="2.200" fill="#dc3030"/>
<rect x="710.0" y="42.500" width="8.700" height="3.800" rx="1.800" fill="#fff" opacity="0.200"/>
<rect x="720.1" y="41.800" width="10.300" height="10" rx="2.200" fill="#804000"/>
<rect x="720.9" y="42.500" width="8.700" height="3.800" rx="1.800" fill="#fff" opacity="0.200"/>
<rect x="731.1" y="41.800" width="10.300" height="10" rx="2.200" fill="#f88040"/>
<rect x="731.9" y="42.500" width="8.700" height="3.800" rx="1.800" fill="#fff" opacity="0.200"/>
<rect x="742.0" y="41.800" width="10.300" height="10" rx="2.200" fill="#f8846c"/>
<rect x="742.8" y="42.500" width="8.700" height="3.800" rx="1.800" fill="#fff" opacity="0.200"/>
<rect x="753.0" y="41.800" width="10.300" height="10" rx="2.200" fill="#f8b444"/>
<rect x="753.8" y="42.500" width="8.700" height="3.800" rx="1.800" fill="#fff" opacity="0.200"/>
<rect x="763.9" y="41.800" width="10.300" height="10" rx="2.200" fill="#f8f000"/>
<rect x="764.7" y="42.500" width="8.700" height="3.800" rx="1.800" fill="#fff" opacity="0.200"/>
<rect x="774.9" y="41.800" width="10.300" height="10" rx="2.200" fill="#62f0c4"/>
<rect x="775.7" y="42.500" width="8.700" height="3.800" rx="1.800" fill="#fff" opacity="0.200"/>
<rect x="785.8" y="41.800" width="10.300" height="10" rx="2.200" fill="#84f084"/>
<rect x="786.6" y="42.500" width="8.700" height="3.800" rx="1.800" fill="#fff" opacity="0.200"/>
<rect x="796.8" y="41.800" width="10.300" height="10" rx="2.200" fill="#14e014"/>
<rect x="797.6" y="42.500" width="8.700" height="3.800" rx="1.800" fill="#fff" opacity="0.200"/>
<rect x="807.8" y="41.800" width="10.300" height="10" rx="2.200" fill="#44d044"/>
<rect x="808.5" y="42.500" width="8.700" height="3.800" rx="1.800" fill="#fff" opacity="0.200"/>
<rect x="818.7" y="41.800" width="10.300" height="10" rx="2.200" fill="#30b030"/>
<rect x="819.5" y="42.500" width="8.700" height="3.800" rx="1.800" fill="#fff" opacity="0.200"/>
<rect x="829.6" y="41.800" width="10.300" height="10" rx="2.200" fill="#087008"/>
<rect x="830.4" y="42.500" width="8.700" height="3.800" rx="1.800" fill="#fff" opacity="0.200"/>
<rect x="906.5" y="30.500" width="79" height="21" rx="3" fill="#fff" stroke="#9fb0ba" stroke-width="1"/>
<text x="910.5" y="45" font-size="11" fill="#000" textLength="49" lengthAdjust="spacingAndGlyphs">1000 units</text>
<rect x="967.0" y="33" width="16" height="16" rx="2.500" fill="url(#gDrop)" stroke="#8eacbc" stroke-width="0.8"/>
<path d="M971.0,39 L979.0,39 L975.0,43.5 Z" fill="#111"/>
<rect x="1072.5" y="30.500" width="82" height="21" rx="3" fill="#fff" stroke="#9fb0ba" stroke-width="1"/>
<text x="1076.5" y="45" font-size="11" fill="#000" textLength="23" lengthAdjust="spacingAndGlyphs">Daily</text>
<rect x="1136.0" y="33" width="16" height="16" rx="2.500" fill="url(#gDrop)" stroke="#8eacbc" stroke-width="0.8"/>
<path d="M1140.0,39 L1148.0,39 L1144.0,43.5 Z" fill="#111"/>
<rect x="1241.500" y="26.500" width="49" height="27.500" rx="3" fill="url(#gBtn)" stroke="#a4a4a4" stroke-width="1"/>
<line x1="1275.500" y1="27" x2="1275.500" y2="54" stroke="#b4b4b4"/>
<path d="M1279,38.500 L1287,38.500 L1283,43 Z" fill="#111"/>
<rect x="1243" y="28" width="32" height="25" rx="1.500" fill="#e4efe6" stroke="#9ab8a4" stroke-width="0.8"/>
<g fill="none"><path d="M1245,46 L1249,41 L1253,38 L1257,40 L1262,48 L1266,42 L1270,36 L1273,31" stroke="#22aa22" stroke-width="1"/><path d="M1245,41 L1250,44 L1255,36 L1259,39 L1263,45 L1268,40 L1273,33" stroke="#dd3333" stroke-width="0.9"/><path d="M1245,33.500 h8 M1249,29.500 v8" stroke="#8a9a9a" stroke-width="4"/><path d="M1245.500,33.500 h7 M1249,30 v7" stroke="#fff" stroke-width="2.600"/></g>
<path d="M1255.500,48 v-3.500 h-1.800 l3,-3.500 l3,3.500 h-1.800 v3.500 Z" fill="#22bb22"/><path d="M1263.500,29.500 v3.500 h-1.800 l3,3.500 l3,-3.500 h-1.800 v-3.500 Z" fill="#dd2222"/>
<rect x="1245" y="49.500" width="4.500" height="3" fill="#22bb22"/><rect x="1251" y="49.500" width="4.500" height="3" fill="#aa22aa"/><rect x="1257" y="49.500" width="4.500" height="3" fill="#22bb22"/><rect x="1263" y="49.500" width="4.500" height="3" fill="#aa22aa"/><rect x="1269" y="47" width="4.500" height="5.500" fill="#22bb22"/>
<rect x="62.5" y="702.500" width="1186" height="16" rx="3" fill="#a4c2d0" stroke="#8aabbb" stroke-width="1"/>
<rect x="63" y="703" width="1185" height="5" rx="2.500" fill="#b2cdd9" opacity="0.800"/>
<rect x="62.5" y="702.500" width="13" height="16" rx="3" fill="#bdd5e0" stroke="#7f9fae" stroke-width="1"/><path d="M72,706.300 L72,714.700 L66.500,710.500 Z" fill="#111"/>
<rect x="1235.500" y="702.500" width="13" height="16" rx="3" fill="#bdd5e0" stroke="#7f9fae" stroke-width="1"/><path d="M1239.500,706.300 L1239.500,714.700 L1245,710.500 Z" fill="#111"/>
<rect x="1122.500" y="704" width="76" height="13.500" rx="3" fill="#b8d2de" stroke="#8eafbf" stroke-width="1"/><rect x="1123.500" y="705" width="74" height="5" rx="2" fill="#c6dce6" opacity="0.700"/><path d="M1157,708.500 h7 M1157,710.500 h7 M1157,712.500 h7" stroke="#7f9fae" stroke-width="1"/>
<g><rect x="10.5" y="706.500" width="14" height="11" fill="#fff" stroke="#3050a0" stroke-width="1"/><rect x="10.5" y="706.5" width="14" height="2.5" fill="#3060c0"/><path d="M12,716 L16,711 L19,714 L23,709" stroke="#cc2222" stroke-width="1" fill="none"/><path d="M15,708 C17,703 21,702 23,703 L22,700 L29,704.5 L23,709.500 L23,706.5 C20,706 18,707 15,708 Z" fill="#44cc44" stroke="#117711" stroke-width="0.8"/><path d="M20,718 h6 l-3,3 Z" fill="#111"/></g>
<g><path d="M38.500,702 c-3,0 -3,6 -1,7 c-3,1 -3,10 1,10 c4,0 4,-9 1,-10 c2,-1 2,-7 -1,-7 Z" fill="#fff" stroke="#111" stroke-width="1.4"/><line x1="47.5" y1="704" x2="47.5" y2="718" stroke="#c03030"/><rect x="45.5" y="707.5" width="4" height="7" fill="#f07070" stroke="#c03030" stroke-width="0.8"/><line x1="53.5" y1="700" x2="53.5" y2="716" stroke="#208020"/><rect x="51.5" y="703.5" width="4" height="8" fill="#60d860" stroke="#208020" stroke-width="0.8"/><path d="M49,718 h6 l-3,3 Z" fill="#111"/></g>
<g><line x1="1258.5" y1="708" x2="1258.5" y2="722" stroke="#c03030"/><rect x="1256" y="711" width="5" height="8" fill="#e06070"/><line x1="1268.5" y1="700" x2="1268.5" y2="722" stroke="#208020"/><rect x="1265" y="703" width="7" height="16" fill="#55c055"/><path d="M1257,718 L1264,710 C1263,706.5 1266,704 1269,704.5 L1267,707.5 L1268.500,709.5 L1271.5,709 C1271.5,712 1269,713.5 1266.5,712.5 L1259.500,720.5 Z" fill="#fff" stroke="#777" stroke-width="0.7"/></g>
<g><circle cx="1290" cy="708" r="5.6" fill="#f4f4f4" stroke="#111" stroke-width="1.5"/><path d="M1294,712.5 L1300,718.5" stroke="#111" stroke-width="3" stroke-linecap="round"/><circle cx="1289" cy="707" r="3" fill="#fff"/><circle cx="1290" cy="708" r="5.6" fill="#ccc" opacity="0.5"/></g>
<path d="M1301.5,703 v11 M1299.500,705.5 l2,-2.500 l2,2.5 M1299.5,711.5 l2,2.5 l2,-2.5 M1284,718.500 h10 M1286.5,716.5 l-2.500,2 l2.5,2 M1291.5,716.5 l2.5,2 l-2.5,2" stroke="#1030c8" stroke-width="1.2" fill="none"/>
<g><circle cx="1318" cy="708" r="5.6" fill="#f4f4f4" stroke="#111" stroke-width="1.5"/><path d="M1322,712.5 L1328,718.5" stroke="#111" stroke-width="3" stroke-linecap="round"/><path d="M1315,708 h6" stroke="#1030c8" stroke-width="1.6"/></g>
<g><circle cx="1346" cy="708" r="5.6" fill="#f4f4f4" stroke="#111" stroke-width="1.5"/><path d="M1350,712.5 L1356,718.5" stroke="#111" stroke-width="3" stroke-linecap="round"/><path d="M1343,708 h6 M1346,705 v6" stroke="#1030c8" stroke-width="1.6"/></g>
<rect x="0" y="728" width="1366" height="40" fill="#020202"/>
<rect x="440" y="728" width="47" height="40" fill="#262626"/>
<rect x="440" y="766" width="47" height="2" fill="#8ab8ee"/><rect x="395" y="766" width="44" height="2" fill="#8ab8ee"/>
<g fill="#fff"><path d="M16,741.5 L23,740.5 L23,747.5 L16,747.5 Z M24,740.300 L33,739 L33,747.5 L24,747.5 Z M16,748.5 L23,748.5 L23,755.5 L16,754.500 Z M24,748.5 L33,748.5 L33,757 L24,755.700 Z"/></g>
<g fill="none" stroke="#fff" stroke-width="1.6"><circle cx="75" cy="745" r="5.5"/><path d="M71,749.500 L64.500,756.5"/></g>
<g fill="none" stroke="#fff" stroke-width="1.5"><rect x="114.500" y="742.500" width="12" height="12"/><path d="M112,744 h-2 v9 h2 M129,744 h2 v9 h-2"/></g>
<g><path d="M158,740 L180,737 L180,756 L158,758 Z" fill="#8a8a8a"/><path d="M158,746 L180,743.5 M158,752 L180,750 M165,740 v6 M174,738.500 v5.5 M169,745.500 v6 M162,752 v5.500 M176,750.5 v5.5" stroke="#444" stroke-width="1"/></g>
<text x="0" y="0" font-size="33" font-weight="bold" fill="#1f7fe0" text-anchor="middle" transform="translate(219.500,758.500) scale(1.12,1)">e</text>
<g><path d="M256,744 L278,741 L278,759 L256,756 Z" fill="#fff"/><path d="M262,743 c0,-6 9,-7 10,-1" stroke="#fff" stroke-width="1.5" fill="none"/><path d="M261,747.500 L266,747 L266,751 L261,751 Z M267,746.900 L273,746.300 L273,751 L267,751 Z M261,752 L266,752 L266,755.500 L261,755 Z M267,752 L273,752 L273,756.300 L267,755.600 Z" fill="#020202"/></g>
<g><path d="M305,741 L313,741 L315,743 L328,743 L328,757 L305,757 Z" fill="#f6d363"/><rect x="305" y="745" width="23" height="12" fill="#fbe18a"/><path d="M311,757 v-5 h11 v5" fill="none" stroke="#38a8e8" stroke-width="2.6"/></g>
<g><path d="M355,739 L373,741 L373,757 L355,759 Z" fill="#4a90c8"/><circle cx="364" cy="749" r="6.2" fill="#f08020"/><path d="M362,745.500 L368,749 L362,752.500 Z" fill="#fff"/></g>
<g><circle cx="415" cy="748" r="11.5" fill="#dd4b3e"/><path d="M415,748 L405.040,753.750 A11.5,11.5 0 0 0 415,759.500 L420.750,749.540 Z" fill="#1aa260"/><path d="M415,748 L405.040,753.750 A11.5,11.5 0 0 0 417.500,759.200 L423,748 Z" fill="#1aa260"/><path d="M415,748 L417.500,759.200 A11.500,11.5 0 0 0 425.500,743.500 L415,743.500 Z" fill="#ffce44"/><circle cx="415" cy="748" r="5.2" fill="#fff"/><circle cx="415" cy="748" r="4" fill="#4a8af4"/></g>
<g><line x1="458.500" y1="743" x2="458.500" y2="761" stroke="#d04040"/><rect x="455" y="747" width="7" height="10" fill="#f06868"/><line x1="469.500" y1="735" x2="469.500" y2="760" stroke="#28b028"/><rect x="466" y="741" width="7" height="14" fill="#50d850"/></g>
<path d="M1131.500,750 L1137.500,744 L1143.5,750" stroke="#fff" stroke-width="1.4" fill="none"/>
<g fill="none" stroke="#fff" stroke-width="1.200"><rect x="1158.500" y="745" width="10.500" height="7"/><path d="M1170,747 v3"/><path d="M1155,744 v2.500 M1157.500,744 v2.500 M1154,746.500 h4.500 v2 q-2.200,2 -4.500,0 Z M1156.200,750 v1.500 h2.300"/></g>
<g fill="none" stroke="#fff" stroke-width="1.100"><path d="M1178.500,746 h2.800 l3.200,-3.200 v10.400 l-3.200,-3.200 h-2.800 Z"/><path d="M1187,745.200 q1.800,2.800 0,5.600 M1189.300,743.800 q2.800,4.200 0,8.400 M1191.600,742.400 q3.800,5.600 0,11.200"/></g>
<g fill="none" stroke="#fff" stroke-width="1.300"><path d="M1206,754 A10,10 0 0 1 1216,744"/><path d="M1209.500,754 A6.500,6.500 0 0 1 1216,747.500"/><path d="M1213,754 A3,3 0 0 1 1216,751"/></g><rect x="1215" y="751" width="3" height="3" fill="#fff"/>
<g fill="none" stroke="#fff" stroke-width="1.300"><path d="M1226.500,741 h15 v10.500 h-5.500 l-2,2.500 l-2,-2.500 h-5.500 Z"/><path d="M1229.500,744.500 h9 M1229.500,747.500 h9"/></g>
<text x="1252" y="752.500" font-size="12" fill="#fff" textLength="22.5" lengthAdjust="spacingAndGlyphs">POR</text>
<text x="1308" y="742.500" font-size="12" fill="#fff" textLength="27" lengthAdjust="spacingAndGlyphs">03:10</text>
<text x="1293" y="759.800" font-size="12" fill="#fff" textLength="57" lengthAdjust="spacingAndGlyphs">15-12-2015</text>
<rect x="1361" y="728" width="1" height="40" fill="#555"/>
</svg></body></html>
